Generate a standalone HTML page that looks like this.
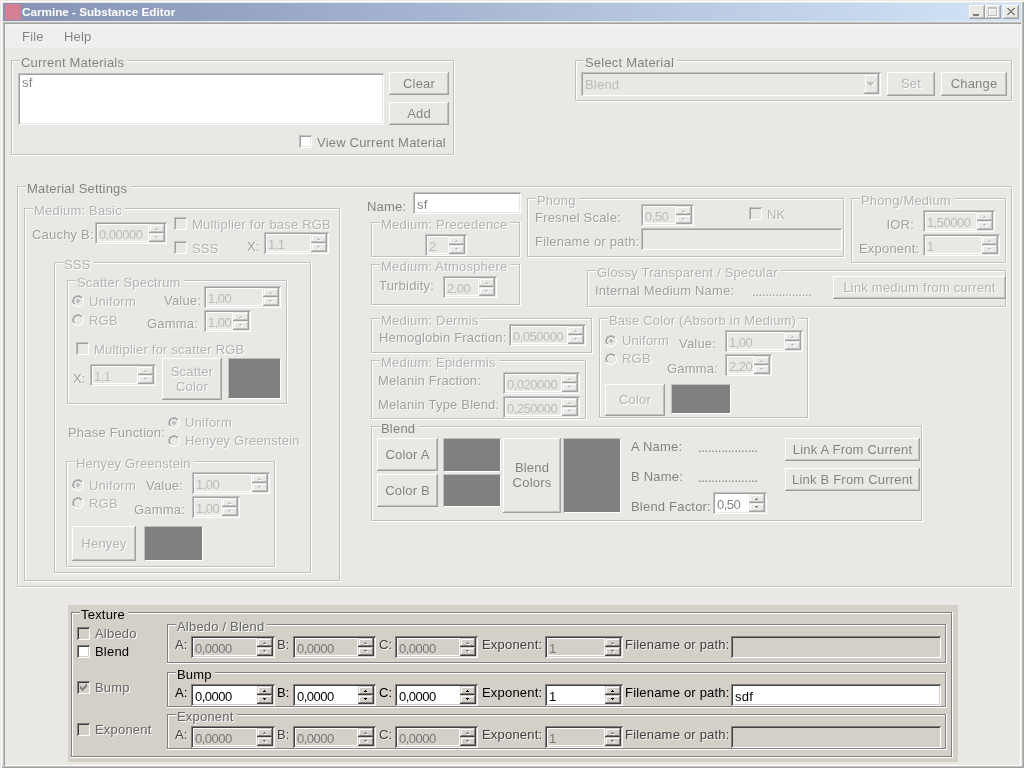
<!DOCTYPE html><html><head><meta charset="utf-8"><style>
html,body{margin:0;padding:0;width:1024px;height:768px;overflow:hidden;background:#d4d0c8}
body>div{will-change:transform}
.a{position:absolute;box-sizing:border-box}
.t{font-family:"Liberation Sans",sans-serif;font-size:13px;line-height:15px;white-space:pre;letter-spacing:0.2px}
.txt{color:#000}
.dis{color:#666;text-shadow:1px 1px 0 #fff}
.edis{color:#777}
.ldis{color:#404040;text-shadow:1px 1px 0 rgba(255,255,255,0.7)}
.ov{position:absolute;left:0;top:0;width:1024px;height:768px;background:rgba(255,255,255,0.5)}
</style></head><body>

<div class="a" style="left:0;top:0;width:1024px;height:768px;background:#d4d0c8">
<div class="a " style="left:0px;top:0px;width:1024px;height:768px;box-shadow:inset 1px 1px #d4d0c8,inset 2px 2px #ffffff,inset -1px -1px #404040,inset -2px -2px #808080"></div>
<div class="a " style="left:3px;top:3px;width:1018px;height:18px;background:linear-gradient(to right,#0a246a,#a6caf0)"></div>
<div class="a " style="left:5px;top:4px;width:16px;height:16px;background:#a80029"></div>
<div class="a" style="left:22px;top:4px;font-family:'Liberation Sans',sans-serif;font-weight:bold;font-size:11.7px;line-height:15px;color:#fff;white-space:pre">Carmine - Substance Editor</div>
<div class="a " style="left:969px;top:5px;width:16px;height:14px;background:#d4d0c8;box-shadow:inset -1px -1px #404040,inset 1px 1px #ffffff,inset -2px -2px #808080;"></div>
<div class="a " style="left:985px;top:5px;width:16px;height:14px;background:#d4d0c8;box-shadow:inset -1px -1px #404040,inset 1px 1px #ffffff,inset -2px -2px #808080;"></div>
<div class="a " style="left:1003px;top:5px;width:16px;height:14px;background:#d4d0c8;box-shadow:inset -1px -1px #404040,inset 1px 1px #ffffff,inset -2px -2px #808080;"></div>
<div class="a " style="left:973px;top:14px;width:6px;height:2px;background:#000"></div>
<svg class="a" style="left:989px;top:8px" width="9" height="9" shape-rendering="crispEdges"><rect x="0" y="0" width="9" height="1" fill="#ffffff"/><rect x="0" y="1" width="9" height="1" fill="#ffffff"/><rect x="0" y="2" width="1" height="1" fill="#ffffff"/><rect x="8" y="2" width="1" height="1" fill="#ffffff"/><rect x="0" y="3" width="1" height="1" fill="#ffffff"/><rect x="8" y="3" width="1" height="1" fill="#ffffff"/><rect x="0" y="4" width="1" height="1" fill="#ffffff"/><rect x="8" y="4" width="1" height="1" fill="#ffffff"/><rect x="0" y="5" width="1" height="1" fill="#ffffff"/><rect x="8" y="5" width="1" height="1" fill="#ffffff"/><rect x="0" y="6" width="1" height="1" fill="#ffffff"/><rect x="8" y="6" width="1" height="1" fill="#ffffff"/><rect x="0" y="7" width="1" height="1" fill="#ffffff"/><rect x="8" y="7" width="1" height="1" fill="#ffffff"/><rect x="0" y="8" width="9" height="1" fill="#ffffff"/></svg>
<svg class="a" style="left:988px;top:7px" width="9" height="9" shape-rendering="crispEdges"><rect x="0" y="0" width="9" height="1" fill="#808080"/><rect x="0" y="1" width="9" height="1" fill="#808080"/><rect x="0" y="2" width="1" height="1" fill="#808080"/><rect x="8" y="2" width="1" height="1" fill="#808080"/><rect x="0" y="3" width="1" height="1" fill="#808080"/><rect x="8" y="3" width="1" height="1" fill="#808080"/><rect x="0" y="4" width="1" height="1" fill="#808080"/><rect x="8" y="4" width="1" height="1" fill="#808080"/><rect x="0" y="5" width="1" height="1" fill="#808080"/><rect x="8" y="5" width="1" height="1" fill="#808080"/><rect x="0" y="6" width="1" height="1" fill="#808080"/><rect x="8" y="6" width="1" height="1" fill="#808080"/><rect x="0" y="7" width="1" height="1" fill="#808080"/><rect x="8" y="7" width="1" height="1" fill="#808080"/><rect x="0" y="8" width="9" height="1" fill="#808080"/></svg>
<svg class="a" style="left:1007px;top:8px" width="8" height="7" shape-rendering="crispEdges"><rect x="0" y="0" width="2" height="1" fill="#000"/><rect x="6" y="0" width="2" height="1" fill="#000"/><rect x="1" y="1" width="2" height="1" fill="#000"/><rect x="5" y="1" width="2" height="1" fill="#000"/><rect x="2" y="2" width="4" height="1" fill="#000"/><rect x="3" y="3" width="2" height="1" fill="#000"/><rect x="2" y="4" width="4" height="1" fill="#000"/><rect x="1" y="5" width="2" height="1" fill="#000"/><rect x="5" y="5" width="2" height="1" fill="#000"/><rect x="0" y="6" width="2" height="1" fill="#000"/><rect x="6" y="6" width="2" height="1" fill="#000"/></svg>
<div class="a " style="left:3px;top:22px;width:1018px;height:744px;box-shadow:inset 1px 1px #808080,inset 2px 2px #404040,inset -1px -1px #ffffff"></div>
<div class="a " style="left:5px;top:24px;width:1014px;height:24px;background:#dfdfdf;box-shadow:inset 1px 1px #e8e8e8"></div>
<div class="a t txt " style="left:22px;top:29px;">File</div>
<div class="a t txt " style="left:64px;top:29px;">Help</div>
<div class="a " style="left:11px;top:60px;width:443px;height:95px;border:1px solid #808080;box-shadow:inset 1px 1px #ffffff,0 1px #ffffff,1px 0 #ffffff,1px 1px #ffffff;"></div>
<div class="a t txt" style="left:20px;top:55px;padding:0 3px 0 1px;background:#d4d0c8">Current Materials</div>
<div class="a " style="left:18px;top:73px;width:366px;height:52px;background:#ffffff;box-shadow:inset 1px 1px #808080,inset -1px -1px #ffffff,inset 2px 2px #404040,inset -2px -2px #d4d0c8;"></div>
<div class="a t txt " style="left:22px;top:75px;">sf</div>
<div class="a " style="left:389px;top:72px;width:60px;height:23px;background:#d4d0c8;box-shadow:inset -1px -1px #404040,inset 1px 1px #ffffff,inset -2px -2px #808080;"></div>
<div class="a t txt" style="left:389px;width:60px;text-align:center;top:76px;">Clear</div>
<div class="a " style="left:389px;top:102px;width:60px;height:23px;background:#d4d0c8;box-shadow:inset -1px -1px #404040,inset 1px 1px #ffffff,inset -2px -2px #808080;"></div>
<div class="a t txt" style="left:389px;width:60px;text-align:center;top:106px;">Add</div>
<div class="a " style="left:299px;top:135px;width:13px;height:13px;background:#ffffff;box-shadow:inset 1px 1px #808080,inset -1px -1px #ffffff,inset 2px 2px #404040,inset -2px -2px #d4d0c8;"></div>
<div class="a t txt " style="left:317px;top:135px;">View Current Material</div>
<div class="a " style="left:575px;top:60px;width:437px;height:41px;border:1px solid #808080;box-shadow:inset 1px 1px #ffffff,0 1px #ffffff,1px 0 #ffffff,1px 1px #ffffff;"></div>
<div class="a t txt" style="left:584px;top:55px;padding:0 3px 0 1px;background:#d4d0c8">Select Material</div>
<div class="a " style="left:581px;top:72px;width:300px;height:24px;background:#d4d0c8;box-shadow:inset 1px 1px #808080,inset -1px -1px #ffffff,inset 2px 2px #404040,inset -2px -2px #d4d0c8;"></div>
<div class="a t edis" style="left:585px;top:77px">Blend</div>
<div class="a " style="left:864px;top:74px;width:15px;height:20px;background:#d4d0c8;box-shadow:inset -1px -1px #404040,inset 1px 1px #d4d0c8,inset -2px -2px #808080,inset 2px 2px #ffffff"></div>
<svg class="a" style="left:867px;top:82px" width="7" height="4" shape-rendering="crispEdges"><rect x="0" y="0" width="7" height="1" fill="#808080"/><rect x="1" y="1" width="5" height="1" fill="#808080"/><rect x="2" y="2" width="3" height="1" fill="#808080"/><rect x="3" y="3" width="1" height="1" fill="#808080"/></svg>
<svg class="a" style="left:868px;top:83px" width="7" height="4" shape-rendering="crispEdges"><rect x="6" y="0" width="1" height="1" fill="#ffffff"/><rect x="5" y="1" width="1" height="1" fill="#ffffff"/><rect x="4" y="2" width="1" height="1" fill="#ffffff"/></svg>
<div class="a " style="left:887px;top:72px;width:48px;height:24px;background:#d4d0c8;box-shadow:inset -1px -1px #404040,inset 1px 1px #ffffff,inset -2px -2px #808080;"></div>
<div class="a t dis" style="left:887px;width:48px;text-align:center;top:76px;">Set</div>
<div class="a " style="left:941px;top:72px;width:66px;height:24px;background:#d4d0c8;box-shadow:inset -1px -1px #404040,inset 1px 1px #ffffff,inset -2px -2px #808080;"></div>
<div class="a t txt" style="left:941px;width:66px;text-align:center;top:76px;">Change</div>
<div class="a " style="left:17px;top:186px;width:995px;height:401px;border:1px solid #808080;box-shadow:inset 1px 1px #ffffff,0 1px #ffffff,1px 0 #ffffff,1px 1px #ffffff;"></div>
<div class="a t txt" style="left:26px;top:181px;padding:0 3px 0 1px;background:#d4d0c8">Material Settings</div>
<div class="a " style="left:24px;top:208px;width:316px;height:373px;border:1px solid #808080;box-shadow:inset 1px 1px #ffffff,0 1px #ffffff,1px 0 #ffffff,1px 1px #ffffff;"></div>
<div class="a t dis" style="left:33px;top:203px;padding:0 3px 0 1px;background:#d4d0c8">Medium: Basic</div>
<div class="a t ldis " style="left:32px;top:227px;">Cauchy B:</div>
<div class="a " style="left:95px;top:222px;width:72px;height:22px;background:#d4d0c8;box-shadow:inset 1px 1px #808080,inset -1px -1px #ffffff,inset 2px 2px #404040,inset -2px -2px #d4d0c8;"></div>
<div class="a " style="left:149px;top:224px;width:16px;height:9px;background:#d4d0c8;box-shadow:inset -1px -1px #404040,inset 1px 1px #d4d0c8,inset -2px -2px #808080,inset 2px 2px #ffffff"></div>
<div class="a " style="left:149px;top:233px;width:16px;height:9px;background:#d4d0c8;box-shadow:inset -1px -1px #404040,inset 1px 1px #d4d0c8,inset -2px -2px #808080,inset 2px 2px #ffffff"></div>
<svg class="a" style="left:156px;top:229px" width="3" height="2" shape-rendering="crispEdges"><rect x="1" y="0" width="1" height="1" fill="#ffffff"/><rect x="0" y="1" width="3" height="1" fill="#ffffff"/></svg>
<svg class="a" style="left:155px;top:228px" width="3" height="2" shape-rendering="crispEdges"><rect x="1" y="0" width="1" height="1" fill="#808080"/><rect x="0" y="1" width="3" height="1" fill="#808080"/></svg>
<svg class="a" style="left:156px;top:237px" width="3" height="2" shape-rendering="crispEdges"><rect x="0" y="0" width="3" height="1" fill="#ffffff"/><rect x="1" y="1" width="1" height="1" fill="#ffffff"/></svg>
<svg class="a" style="left:155px;top:236px" width="3" height="2" shape-rendering="crispEdges"><rect x="0" y="0" width="3" height="1" fill="#808080"/><rect x="1" y="1" width="1" height="1" fill="#808080"/></svg>
<div class="a " style="left:97px;top:224px;width:52px;height:18px;border:1px solid #ffffff"></div>
<div class="a t edis" style="left:99px;top:227px;letter-spacing:-0.5px">0,00000</div>
<div class="a " style="left:174px;top:217px;width:13px;height:13px;background:#d4d0c8;box-shadow:inset 1px 1px #808080,inset -1px -1px #ffffff,inset 2px 2px #404040,inset -2px -2px #d4d0c8;"></div>
<div class="a t dis " style="left:192px;top:217px;">Multiplier for base RGB</div>
<div class="a " style="left:174px;top:241px;width:13px;height:13px;background:#d4d0c8;box-shadow:inset 1px 1px #808080,inset -1px -1px #ffffff,inset 2px 2px #404040,inset -2px -2px #d4d0c8;"></div>
<div class="a t dis " style="left:192px;top:241px;">SSS</div>
<div class="a t ldis " style="left:247px;top:239px;">X:</div>
<div class="a " style="left:264px;top:232px;width:65px;height:22px;background:#d4d0c8;box-shadow:inset 1px 1px #808080,inset -1px -1px #ffffff,inset 2px 2px #404040,inset -2px -2px #d4d0c8;"></div>
<div class="a " style="left:311px;top:234px;width:16px;height:9px;background:#d4d0c8;box-shadow:inset -1px -1px #404040,inset 1px 1px #d4d0c8,inset -2px -2px #808080,inset 2px 2px #ffffff"></div>
<div class="a " style="left:311px;top:243px;width:16px;height:9px;background:#d4d0c8;box-shadow:inset -1px -1px #404040,inset 1px 1px #d4d0c8,inset -2px -2px #808080,inset 2px 2px #ffffff"></div>
<svg class="a" style="left:318px;top:239px" width="3" height="2" shape-rendering="crispEdges"><rect x="1" y="0" width="1" height="1" fill="#ffffff"/><rect x="0" y="1" width="3" height="1" fill="#ffffff"/></svg>
<svg class="a" style="left:317px;top:238px" width="3" height="2" shape-rendering="crispEdges"><rect x="1" y="0" width="1" height="1" fill="#808080"/><rect x="0" y="1" width="3" height="1" fill="#808080"/></svg>
<svg class="a" style="left:318px;top:247px" width="3" height="2" shape-rendering="crispEdges"><rect x="0" y="0" width="3" height="1" fill="#ffffff"/><rect x="1" y="1" width="1" height="1" fill="#ffffff"/></svg>
<svg class="a" style="left:317px;top:246px" width="3" height="2" shape-rendering="crispEdges"><rect x="0" y="0" width="3" height="1" fill="#808080"/><rect x="1" y="1" width="1" height="1" fill="#808080"/></svg>
<div class="a " style="left:266px;top:234px;width:45px;height:18px;border:1px solid #ffffff"></div>
<div class="a t edis" style="left:268px;top:237px;letter-spacing:-0.5px">1,1</div>
<div class="a " style="left:54px;top:262px;width:257px;height:311px;border:1px solid #808080;box-shadow:inset 1px 1px #ffffff,0 1px #ffffff,1px 0 #ffffff,1px 1px #ffffff;"></div>
<div class="a t dis" style="left:63px;top:257px;padding:0 3px 0 1px;background:#d4d0c8">SSS</div>
<div class="a " style="left:67px;top:280px;width:220px;height:124px;border:1px solid #808080;box-shadow:inset 1px 1px #ffffff,0 1px #ffffff,1px 0 #ffffff,1px 1px #ffffff;"></div>
<div class="a t dis" style="left:76px;top:275px;padding:0 3px 0 1px;background:#d4d0c8">Scatter Spectrum</div>
<svg class="a" style="left:72px;top:295px" width="12" height="12" shape-rendering="crispEdges"><rect x="4" y="0" width="4" height="1" fill="#808080"/><rect x="2" y="1" width="2" height="1" fill="#808080"/><rect x="4" y="1" width="4" height="1" fill="#404040"/><rect x="8" y="1" width="2" height="1" fill="#808080"/><rect x="1" y="2" width="1" height="1" fill="#808080"/><rect x="2" y="2" width="2" height="1" fill="#404040"/><rect x="4" y="2" width="4" height="1" fill="#d4d0c8"/><rect x="8" y="2" width="2" height="1" fill="#404040"/><rect x="10" y="2" width="1" height="1" fill="#ffffff"/><rect x="1" y="3" width="1" height="1" fill="#808080"/><rect x="2" y="3" width="1" height="1" fill="#404040"/><rect x="3" y="3" width="6" height="1" fill="#d4d0c8"/><rect x="9" y="3" width="1" height="1" fill="#d4d0c8"/><rect x="10" y="3" width="1" height="1" fill="#ffffff"/><rect x="0" y="4" width="1" height="1" fill="#808080"/><rect x="1" y="4" width="1" height="1" fill="#404040"/><rect x="2" y="4" width="8" height="1" fill="#d4d0c8"/><rect x="10" y="4" width="1" height="1" fill="#d4d0c8"/><rect x="11" y="4" width="1" height="1" fill="#ffffff"/><rect x="0" y="5" width="1" height="1" fill="#808080"/><rect x="1" y="5" width="1" height="1" fill="#404040"/><rect x="2" y="5" width="8" height="1" fill="#d4d0c8"/><rect x="10" y="5" width="1" height="1" fill="#d4d0c8"/><rect x="11" y="5" width="1" height="1" fill="#ffffff"/><rect x="0" y="6" width="1" height="1" fill="#808080"/><rect x="1" y="6" width="1" height="1" fill="#404040"/><rect x="2" y="6" width="8" height="1" fill="#d4d0c8"/><rect x="10" y="6" width="1" height="1" fill="#d4d0c8"/><rect x="11" y="6" width="1" height="1" fill="#ffffff"/><rect x="0" y="7" width="1" height="1" fill="#808080"/><rect x="1" y="7" width="1" height="1" fill="#404040"/><rect x="2" y="7" width="8" height="1" fill="#d4d0c8"/><rect x="10" y="7" width="1" height="1" fill="#d4d0c8"/><rect x="11" y="7" width="1" height="1" fill="#ffffff"/><rect x="1" y="8" width="1" height="1" fill="#808080"/><rect x="2" y="8" width="1" height="1" fill="#404040"/><rect x="3" y="8" width="6" height="1" fill="#d4d0c8"/><rect x="9" y="8" width="1" height="1" fill="#d4d0c8"/><rect x="10" y="8" width="1" height="1" fill="#ffffff"/><rect x="1" y="9" width="1" height="1" fill="#ffffff"/><rect x="2" y="9" width="2" height="1" fill="#d4d0c8"/><rect x="4" y="9" width="4" height="1" fill="#d4d0c8"/><rect x="8" y="9" width="2" height="1" fill="#d4d0c8"/><rect x="10" y="9" width="1" height="1" fill="#ffffff"/><rect x="2" y="10" width="2" height="1" fill="#ffffff"/><rect x="4" y="10" width="4" height="1" fill="#d4d0c8"/><rect x="8" y="10" width="2" height="1" fill="#ffffff"/><rect x="4" y="11" width="4" height="1" fill="#ffffff"/></svg>
<svg class="a" style="left:72px;top:295px" width="12" height="8" shape-rendering="crispEdges"><rect x="5" y="4" width="2" height="1" fill="#808080"/><rect x="4" y="5" width="4" height="1" fill="#808080"/><rect x="4" y="6" width="4" height="1" fill="#808080"/><rect x="5" y="7" width="2" height="1" fill="#808080"/></svg>
<div class="a t dis " style="left:89px;top:294px;">Uniform</div>
<svg class="a" style="left:72px;top:314px" width="12" height="12" shape-rendering="crispEdges"><rect x="4" y="0" width="4" height="1" fill="#808080"/><rect x="2" y="1" width="2" height="1" fill="#808080"/><rect x="4" y="1" width="4" height="1" fill="#404040"/><rect x="8" y="1" width="2" height="1" fill="#808080"/><rect x="1" y="2" width="1" height="1" fill="#808080"/><rect x="2" y="2" width="2" height="1" fill="#404040"/><rect x="4" y="2" width="4" height="1" fill="#d4d0c8"/><rect x="8" y="2" width="2" height="1" fill="#404040"/><rect x="10" y="2" width="1" height="1" fill="#ffffff"/><rect x="1" y="3" width="1" height="1" fill="#808080"/><rect x="2" y="3" width="1" height="1" fill="#404040"/><rect x="3" y="3" width="6" height="1" fill="#d4d0c8"/><rect x="9" y="3" width="1" height="1" fill="#d4d0c8"/><rect x="10" y="3" width="1" height="1" fill="#ffffff"/><rect x="0" y="4" width="1" height="1" fill="#808080"/><rect x="1" y="4" width="1" height="1" fill="#404040"/><rect x="2" y="4" width="8" height="1" fill="#d4d0c8"/><rect x="10" y="4" width="1" height="1" fill="#d4d0c8"/><rect x="11" y="4" width="1" height="1" fill="#ffffff"/><rect x="0" y="5" width="1" height="1" fill="#808080"/><rect x="1" y="5" width="1" height="1" fill="#404040"/><rect x="2" y="5" width="8" height="1" fill="#d4d0c8"/><rect x="10" y="5" width="1" height="1" fill="#d4d0c8"/><rect x="11" y="5" width="1" height="1" fill="#ffffff"/><rect x="0" y="6" width="1" height="1" fill="#808080"/><rect x="1" y="6" width="1" height="1" fill="#404040"/><rect x="2" y="6" width="8" height="1" fill="#d4d0c8"/><rect x="10" y="6" width="1" height="1" fill="#d4d0c8"/><rect x="11" y="6" width="1" height="1" fill="#ffffff"/><rect x="0" y="7" width="1" height="1" fill="#808080"/><rect x="1" y="7" width="1" height="1" fill="#404040"/><rect x="2" y="7" width="8" height="1" fill="#d4d0c8"/><rect x="10" y="7" width="1" height="1" fill="#d4d0c8"/><rect x="11" y="7" width="1" height="1" fill="#ffffff"/><rect x="1" y="8" width="1" height="1" fill="#808080"/><rect x="2" y="8" width="1" height="1" fill="#404040"/><rect x="3" y="8" width="6" height="1" fill="#d4d0c8"/><rect x="9" y="8" width="1" height="1" fill="#d4d0c8"/><rect x="10" y="8" width="1" height="1" fill="#ffffff"/><rect x="1" y="9" width="1" height="1" fill="#ffffff"/><rect x="2" y="9" width="2" height="1" fill="#d4d0c8"/><rect x="4" y="9" width="4" height="1" fill="#d4d0c8"/><rect x="8" y="9" width="2" height="1" fill="#d4d0c8"/><rect x="10" y="9" width="1" height="1" fill="#ffffff"/><rect x="2" y="10" width="2" height="1" fill="#ffffff"/><rect x="4" y="10" width="4" height="1" fill="#d4d0c8"/><rect x="8" y="10" width="2" height="1" fill="#ffffff"/><rect x="4" y="11" width="4" height="1" fill="#ffffff"/></svg>
<div class="a t dis " style="left:89px;top:313px;">RGB</div>
<div class="a t ldis " style="left:164px;top:293px;">Value:</div>
<div class="a " style="left:204px;top:286px;width:77px;height:22px;background:#d4d0c8;box-shadow:inset 1px 1px #808080,inset -1px -1px #ffffff,inset 2px 2px #404040,inset -2px -2px #d4d0c8;"></div>
<div class="a " style="left:263px;top:288px;width:16px;height:9px;background:#d4d0c8;box-shadow:inset -1px -1px #404040,inset 1px 1px #d4d0c8,inset -2px -2px #808080,inset 2px 2px #ffffff"></div>
<div class="a " style="left:263px;top:297px;width:16px;height:9px;background:#d4d0c8;box-shadow:inset -1px -1px #404040,inset 1px 1px #d4d0c8,inset -2px -2px #808080,inset 2px 2px #ffffff"></div>
<svg class="a" style="left:270px;top:293px" width="3" height="2" shape-rendering="crispEdges"><rect x="1" y="0" width="1" height="1" fill="#ffffff"/><rect x="0" y="1" width="3" height="1" fill="#ffffff"/></svg>
<svg class="a" style="left:269px;top:292px" width="3" height="2" shape-rendering="crispEdges"><rect x="1" y="0" width="1" height="1" fill="#808080"/><rect x="0" y="1" width="3" height="1" fill="#808080"/></svg>
<svg class="a" style="left:270px;top:301px" width="3" height="2" shape-rendering="crispEdges"><rect x="0" y="0" width="3" height="1" fill="#ffffff"/><rect x="1" y="1" width="1" height="1" fill="#ffffff"/></svg>
<svg class="a" style="left:269px;top:300px" width="3" height="2" shape-rendering="crispEdges"><rect x="0" y="0" width="3" height="1" fill="#808080"/><rect x="1" y="1" width="1" height="1" fill="#808080"/></svg>
<div class="a " style="left:206px;top:288px;width:57px;height:18px;border:1px solid #ffffff"></div>
<div class="a t edis" style="left:208px;top:291px;letter-spacing:-0.5px">1,00</div>
<div class="a t ldis " style="left:147px;top:316px;">Gamma:</div>
<div class="a " style="left:204px;top:310px;width:47px;height:22px;background:#d4d0c8;box-shadow:inset 1px 1px #808080,inset -1px -1px #ffffff,inset 2px 2px #404040,inset -2px -2px #d4d0c8;"></div>
<div class="a " style="left:233px;top:312px;width:16px;height:9px;background:#d4d0c8;box-shadow:inset -1px -1px #404040,inset 1px 1px #d4d0c8,inset -2px -2px #808080,inset 2px 2px #ffffff"></div>
<div class="a " style="left:233px;top:321px;width:16px;height:9px;background:#d4d0c8;box-shadow:inset -1px -1px #404040,inset 1px 1px #d4d0c8,inset -2px -2px #808080,inset 2px 2px #ffffff"></div>
<svg class="a" style="left:240px;top:317px" width="3" height="2" shape-rendering="crispEdges"><rect x="1" y="0" width="1" height="1" fill="#ffffff"/><rect x="0" y="1" width="3" height="1" fill="#ffffff"/></svg>
<svg class="a" style="left:239px;top:316px" width="3" height="2" shape-rendering="crispEdges"><rect x="1" y="0" width="1" height="1" fill="#808080"/><rect x="0" y="1" width="3" height="1" fill="#808080"/></svg>
<svg class="a" style="left:240px;top:325px" width="3" height="2" shape-rendering="crispEdges"><rect x="0" y="0" width="3" height="1" fill="#ffffff"/><rect x="1" y="1" width="1" height="1" fill="#ffffff"/></svg>
<svg class="a" style="left:239px;top:324px" width="3" height="2" shape-rendering="crispEdges"><rect x="0" y="0" width="3" height="1" fill="#808080"/><rect x="1" y="1" width="1" height="1" fill="#808080"/></svg>
<div class="a " style="left:206px;top:312px;width:27px;height:18px;border:1px solid #ffffff"></div>
<div class="a t edis" style="left:208px;top:315px;letter-spacing:-0.5px">1,00</div>
<div class="a " style="left:76px;top:342px;width:13px;height:13px;background:#d4d0c8;box-shadow:inset 1px 1px #808080,inset -1px -1px #ffffff,inset 2px 2px #404040,inset -2px -2px #d4d0c8;"></div>
<div class="a t dis " style="left:94px;top:342px;">Multiplier for scatter RGB</div>
<div class="a t ldis " style="left:73px;top:371px;">X:</div>
<div class="a " style="left:90px;top:364px;width:66px;height:22px;background:#d4d0c8;box-shadow:inset 1px 1px #808080,inset -1px -1px #ffffff,inset 2px 2px #404040,inset -2px -2px #d4d0c8;"></div>
<div class="a " style="left:138px;top:366px;width:16px;height:9px;background:#d4d0c8;box-shadow:inset -1px -1px #404040,inset 1px 1px #d4d0c8,inset -2px -2px #808080,inset 2px 2px #ffffff"></div>
<div class="a " style="left:138px;top:375px;width:16px;height:9px;background:#d4d0c8;box-shadow:inset -1px -1px #404040,inset 1px 1px #d4d0c8,inset -2px -2px #808080,inset 2px 2px #ffffff"></div>
<svg class="a" style="left:145px;top:371px" width="3" height="2" shape-rendering="crispEdges"><rect x="1" y="0" width="1" height="1" fill="#ffffff"/><rect x="0" y="1" width="3" height="1" fill="#ffffff"/></svg>
<svg class="a" style="left:144px;top:370px" width="3" height="2" shape-rendering="crispEdges"><rect x="1" y="0" width="1" height="1" fill="#808080"/><rect x="0" y="1" width="3" height="1" fill="#808080"/></svg>
<svg class="a" style="left:145px;top:379px" width="3" height="2" shape-rendering="crispEdges"><rect x="0" y="0" width="3" height="1" fill="#ffffff"/><rect x="1" y="1" width="1" height="1" fill="#ffffff"/></svg>
<svg class="a" style="left:144px;top:378px" width="3" height="2" shape-rendering="crispEdges"><rect x="0" y="0" width="3" height="1" fill="#808080"/><rect x="1" y="1" width="1" height="1" fill="#808080"/></svg>
<div class="a " style="left:92px;top:366px;width:46px;height:18px;border:1px solid #ffffff"></div>
<div class="a t edis" style="left:94px;top:369px;letter-spacing:-0.5px">1,1</div>
<div class="a " style="left:162px;top:358px;width:60px;height:42px;background:#d4d0c8;box-shadow:inset -1px -1px #404040,inset 1px 1px #ffffff,inset -2px -2px #808080;"></div>
<div class="a t dis" style="left:162px;width:60px;text-align:center;top:364px;">Scatter</div>
<div class="a t dis" style="left:162px;width:60px;text-align:center;top:379px;">Color</div>
<div class="a " style="left:228px;top:358px;width:53px;height:41px;background:#000;box-shadow:inset 1px 1px #808080,inset -1px -1px #ffffff"></div>
<div class="a t ldis " style="left:68px;top:425px;">Phase Function:</div>
<svg class="a" style="left:168px;top:417px" width="12" height="12" shape-rendering="crispEdges"><rect x="4" y="0" width="4" height="1" fill="#808080"/><rect x="2" y="1" width="2" height="1" fill="#808080"/><rect x="4" y="1" width="4" height="1" fill="#404040"/><rect x="8" y="1" width="2" height="1" fill="#808080"/><rect x="1" y="2" width="1" height="1" fill="#808080"/><rect x="2" y="2" width="2" height="1" fill="#404040"/><rect x="4" y="2" width="4" height="1" fill="#d4d0c8"/><rect x="8" y="2" width="2" height="1" fill="#404040"/><rect x="10" y="2" width="1" height="1" fill="#ffffff"/><rect x="1" y="3" width="1" height="1" fill="#808080"/><rect x="2" y="3" width="1" height="1" fill="#404040"/><rect x="3" y="3" width="6" height="1" fill="#d4d0c8"/><rect x="9" y="3" width="1" height="1" fill="#d4d0c8"/><rect x="10" y="3" width="1" height="1" fill="#ffffff"/><rect x="0" y="4" width="1" height="1" fill="#808080"/><rect x="1" y="4" width="1" height="1" fill="#404040"/><rect x="2" y="4" width="8" height="1" fill="#d4d0c8"/><rect x="10" y="4" width="1" height="1" fill="#d4d0c8"/><rect x="11" y="4" width="1" height="1" fill="#ffffff"/><rect x="0" y="5" width="1" height="1" fill="#808080"/><rect x="1" y="5" width="1" height="1" fill="#404040"/><rect x="2" y="5" width="8" height="1" fill="#d4d0c8"/><rect x="10" y="5" width="1" height="1" fill="#d4d0c8"/><rect x="11" y="5" width="1" height="1" fill="#ffffff"/><rect x="0" y="6" width="1" height="1" fill="#808080"/><rect x="1" y="6" width="1" height="1" fill="#404040"/><rect x="2" y="6" width="8" height="1" fill="#d4d0c8"/><rect x="10" y="6" width="1" height="1" fill="#d4d0c8"/><rect x="11" y="6" width="1" height="1" fill="#ffffff"/><rect x="0" y="7" width="1" height="1" fill="#808080"/><rect x="1" y="7" width="1" height="1" fill="#404040"/><rect x="2" y="7" width="8" height="1" fill="#d4d0c8"/><rect x="10" y="7" width="1" height="1" fill="#d4d0c8"/><rect x="11" y="7" width="1" height="1" fill="#ffffff"/><rect x="1" y="8" width="1" height="1" fill="#808080"/><rect x="2" y="8" width="1" height="1" fill="#404040"/><rect x="3" y="8" width="6" height="1" fill="#d4d0c8"/><rect x="9" y="8" width="1" height="1" fill="#d4d0c8"/><rect x="10" y="8" width="1" height="1" fill="#ffffff"/><rect x="1" y="9" width="1" height="1" fill="#ffffff"/><rect x="2" y="9" width="2" height="1" fill="#d4d0c8"/><rect x="4" y="9" width="4" height="1" fill="#d4d0c8"/><rect x="8" y="9" width="2" height="1" fill="#d4d0c8"/><rect x="10" y="9" width="1" height="1" fill="#ffffff"/><rect x="2" y="10" width="2" height="1" fill="#ffffff"/><rect x="4" y="10" width="4" height="1" fill="#d4d0c8"/><rect x="8" y="10" width="2" height="1" fill="#ffffff"/><rect x="4" y="11" width="4" height="1" fill="#ffffff"/></svg>
<svg class="a" style="left:168px;top:417px" width="12" height="8" shape-rendering="crispEdges"><rect x="5" y="4" width="2" height="1" fill="#808080"/><rect x="4" y="5" width="4" height="1" fill="#808080"/><rect x="4" y="6" width="4" height="1" fill="#808080"/><rect x="5" y="7" width="2" height="1" fill="#808080"/></svg>
<div class="a t dis " style="left:185px;top:415px;">Uniform</div>
<svg class="a" style="left:168px;top:435px" width="12" height="12" shape-rendering="crispEdges"><rect x="4" y="0" width="4" height="1" fill="#808080"/><rect x="2" y="1" width="2" height="1" fill="#808080"/><rect x="4" y="1" width="4" height="1" fill="#404040"/><rect x="8" y="1" width="2" height="1" fill="#808080"/><rect x="1" y="2" width="1" height="1" fill="#808080"/><rect x="2" y="2" width="2" height="1" fill="#404040"/><rect x="4" y="2" width="4" height="1" fill="#d4d0c8"/><rect x="8" y="2" width="2" height="1" fill="#404040"/><rect x="10" y="2" width="1" height="1" fill="#ffffff"/><rect x="1" y="3" width="1" height="1" fill="#808080"/><rect x="2" y="3" width="1" height="1" fill="#404040"/><rect x="3" y="3" width="6" height="1" fill="#d4d0c8"/><rect x="9" y="3" width="1" height="1" fill="#d4d0c8"/><rect x="10" y="3" width="1" height="1" fill="#ffffff"/><rect x="0" y="4" width="1" height="1" fill="#808080"/><rect x="1" y="4" width="1" height="1" fill="#404040"/><rect x="2" y="4" width="8" height="1" fill="#d4d0c8"/><rect x="10" y="4" width="1" height="1" fill="#d4d0c8"/><rect x="11" y="4" width="1" height="1" fill="#ffffff"/><rect x="0" y="5" width="1" height="1" fill="#808080"/><rect x="1" y="5" width="1" height="1" fill="#404040"/><rect x="2" y="5" width="8" height="1" fill="#d4d0c8"/><rect x="10" y="5" width="1" height="1" fill="#d4d0c8"/><rect x="11" y="5" width="1" height="1" fill="#ffffff"/><rect x="0" y="6" width="1" height="1" fill="#808080"/><rect x="1" y="6" width="1" height="1" fill="#404040"/><rect x="2" y="6" width="8" height="1" fill="#d4d0c8"/><rect x="10" y="6" width="1" height="1" fill="#d4d0c8"/><rect x="11" y="6" width="1" height="1" fill="#ffffff"/><rect x="0" y="7" width="1" height="1" fill="#808080"/><rect x="1" y="7" width="1" height="1" fill="#404040"/><rect x="2" y="7" width="8" height="1" fill="#d4d0c8"/><rect x="10" y="7" width="1" height="1" fill="#d4d0c8"/><rect x="11" y="7" width="1" height="1" fill="#ffffff"/><rect x="1" y="8" width="1" height="1" fill="#808080"/><rect x="2" y="8" width="1" height="1" fill="#404040"/><rect x="3" y="8" width="6" height="1" fill="#d4d0c8"/><rect x="9" y="8" width="1" height="1" fill="#d4d0c8"/><rect x="10" y="8" width="1" height="1" fill="#ffffff"/><rect x="1" y="9" width="1" height="1" fill="#ffffff"/><rect x="2" y="9" width="2" height="1" fill="#d4d0c8"/><rect x="4" y="9" width="4" height="1" fill="#d4d0c8"/><rect x="8" y="9" width="2" height="1" fill="#d4d0c8"/><rect x="10" y="9" width="1" height="1" fill="#ffffff"/><rect x="2" y="10" width="2" height="1" fill="#ffffff"/><rect x="4" y="10" width="4" height="1" fill="#d4d0c8"/><rect x="8" y="10" width="2" height="1" fill="#ffffff"/><rect x="4" y="11" width="4" height="1" fill="#ffffff"/></svg>
<div class="a t dis " style="left:185px;top:433px;">Henyey Greenstein</div>
<div class="a " style="left:66px;top:461px;width:209px;height:106px;border:1px solid #808080;box-shadow:inset 1px 1px #ffffff,0 1px #ffffff,1px 0 #ffffff,1px 1px #ffffff;"></div>
<div class="a t dis" style="left:75px;top:456px;padding:0 3px 0 1px;background:#d4d0c8">Henyey Greenstein</div>
<svg class="a" style="left:72px;top:479px" width="12" height="12" shape-rendering="crispEdges"><rect x="4" y="0" width="4" height="1" fill="#808080"/><rect x="2" y="1" width="2" height="1" fill="#808080"/><rect x="4" y="1" width="4" height="1" fill="#404040"/><rect x="8" y="1" width="2" height="1" fill="#808080"/><rect x="1" y="2" width="1" height="1" fill="#808080"/><rect x="2" y="2" width="2" height="1" fill="#404040"/><rect x="4" y="2" width="4" height="1" fill="#d4d0c8"/><rect x="8" y="2" width="2" height="1" fill="#404040"/><rect x="10" y="2" width="1" height="1" fill="#ffffff"/><rect x="1" y="3" width="1" height="1" fill="#808080"/><rect x="2" y="3" width="1" height="1" fill="#404040"/><rect x="3" y="3" width="6" height="1" fill="#d4d0c8"/><rect x="9" y="3" width="1" height="1" fill="#d4d0c8"/><rect x="10" y="3" width="1" height="1" fill="#ffffff"/><rect x="0" y="4" width="1" height="1" fill="#808080"/><rect x="1" y="4" width="1" height="1" fill="#404040"/><rect x="2" y="4" width="8" height="1" fill="#d4d0c8"/><rect x="10" y="4" width="1" height="1" fill="#d4d0c8"/><rect x="11" y="4" width="1" height="1" fill="#ffffff"/><rect x="0" y="5" width="1" height="1" fill="#808080"/><rect x="1" y="5" width="1" height="1" fill="#404040"/><rect x="2" y="5" width="8" height="1" fill="#d4d0c8"/><rect x="10" y="5" width="1" height="1" fill="#d4d0c8"/><rect x="11" y="5" width="1" height="1" fill="#ffffff"/><rect x="0" y="6" width="1" height="1" fill="#808080"/><rect x="1" y="6" width="1" height="1" fill="#404040"/><rect x="2" y="6" width="8" height="1" fill="#d4d0c8"/><rect x="10" y="6" width="1" height="1" fill="#d4d0c8"/><rect x="11" y="6" width="1" height="1" fill="#ffffff"/><rect x="0" y="7" width="1" height="1" fill="#808080"/><rect x="1" y="7" width="1" height="1" fill="#404040"/><rect x="2" y="7" width="8" height="1" fill="#d4d0c8"/><rect x="10" y="7" width="1" height="1" fill="#d4d0c8"/><rect x="11" y="7" width="1" height="1" fill="#ffffff"/><rect x="1" y="8" width="1" height="1" fill="#808080"/><rect x="2" y="8" width="1" height="1" fill="#404040"/><rect x="3" y="8" width="6" height="1" fill="#d4d0c8"/><rect x="9" y="8" width="1" height="1" fill="#d4d0c8"/><rect x="10" y="8" width="1" height="1" fill="#ffffff"/><rect x="1" y="9" width="1" height="1" fill="#ffffff"/><rect x="2" y="9" width="2" height="1" fill="#d4d0c8"/><rect x="4" y="9" width="4" height="1" fill="#d4d0c8"/><rect x="8" y="9" width="2" height="1" fill="#d4d0c8"/><rect x="10" y="9" width="1" height="1" fill="#ffffff"/><rect x="2" y="10" width="2" height="1" fill="#ffffff"/><rect x="4" y="10" width="4" height="1" fill="#d4d0c8"/><rect x="8" y="10" width="2" height="1" fill="#ffffff"/><rect x="4" y="11" width="4" height="1" fill="#ffffff"/></svg>
<svg class="a" style="left:72px;top:479px" width="12" height="8" shape-rendering="crispEdges"><rect x="5" y="4" width="2" height="1" fill="#808080"/><rect x="4" y="5" width="4" height="1" fill="#808080"/><rect x="4" y="6" width="4" height="1" fill="#808080"/><rect x="5" y="7" width="2" height="1" fill="#808080"/></svg>
<div class="a t dis " style="left:89px;top:478px;">Uniform</div>
<svg class="a" style="left:72px;top:497px" width="12" height="12" shape-rendering="crispEdges"><rect x="4" y="0" width="4" height="1" fill="#808080"/><rect x="2" y="1" width="2" height="1" fill="#808080"/><rect x="4" y="1" width="4" height="1" fill="#404040"/><rect x="8" y="1" width="2" height="1" fill="#808080"/><rect x="1" y="2" width="1" height="1" fill="#808080"/><rect x="2" y="2" width="2" height="1" fill="#404040"/><rect x="4" y="2" width="4" height="1" fill="#d4d0c8"/><rect x="8" y="2" width="2" height="1" fill="#404040"/><rect x="10" y="2" width="1" height="1" fill="#ffffff"/><rect x="1" y="3" width="1" height="1" fill="#808080"/><rect x="2" y="3" width="1" height="1" fill="#404040"/><rect x="3" y="3" width="6" height="1" fill="#d4d0c8"/><rect x="9" y="3" width="1" height="1" fill="#d4d0c8"/><rect x="10" y="3" width="1" height="1" fill="#ffffff"/><rect x="0" y="4" width="1" height="1" fill="#808080"/><rect x="1" y="4" width="1" height="1" fill="#404040"/><rect x="2" y="4" width="8" height="1" fill="#d4d0c8"/><rect x="10" y="4" width="1" height="1" fill="#d4d0c8"/><rect x="11" y="4" width="1" height="1" fill="#ffffff"/><rect x="0" y="5" width="1" height="1" fill="#808080"/><rect x="1" y="5" width="1" height="1" fill="#404040"/><rect x="2" y="5" width="8" height="1" fill="#d4d0c8"/><rect x="10" y="5" width="1" height="1" fill="#d4d0c8"/><rect x="11" y="5" width="1" height="1" fill="#ffffff"/><rect x="0" y="6" width="1" height="1" fill="#808080"/><rect x="1" y="6" width="1" height="1" fill="#404040"/><rect x="2" y="6" width="8" height="1" fill="#d4d0c8"/><rect x="10" y="6" width="1" height="1" fill="#d4d0c8"/><rect x="11" y="6" width="1" height="1" fill="#ffffff"/><rect x="0" y="7" width="1" height="1" fill="#808080"/><rect x="1" y="7" width="1" height="1" fill="#404040"/><rect x="2" y="7" width="8" height="1" fill="#d4d0c8"/><rect x="10" y="7" width="1" height="1" fill="#d4d0c8"/><rect x="11" y="7" width="1" height="1" fill="#ffffff"/><rect x="1" y="8" width="1" height="1" fill="#808080"/><rect x="2" y="8" width="1" height="1" fill="#404040"/><rect x="3" y="8" width="6" height="1" fill="#d4d0c8"/><rect x="9" y="8" width="1" height="1" fill="#d4d0c8"/><rect x="10" y="8" width="1" height="1" fill="#ffffff"/><rect x="1" y="9" width="1" height="1" fill="#ffffff"/><rect x="2" y="9" width="2" height="1" fill="#d4d0c8"/><rect x="4" y="9" width="4" height="1" fill="#d4d0c8"/><rect x="8" y="9" width="2" height="1" fill="#d4d0c8"/><rect x="10" y="9" width="1" height="1" fill="#ffffff"/><rect x="2" y="10" width="2" height="1" fill="#ffffff"/><rect x="4" y="10" width="4" height="1" fill="#d4d0c8"/><rect x="8" y="10" width="2" height="1" fill="#ffffff"/><rect x="4" y="11" width="4" height="1" fill="#ffffff"/></svg>
<div class="a t dis " style="left:89px;top:496px;">RGB</div>
<div class="a t ldis " style="left:146px;top:478px;">Value:</div>
<div class="a " style="left:192px;top:472px;width:78px;height:22px;background:#d4d0c8;box-shadow:inset 1px 1px #808080,inset -1px -1px #ffffff,inset 2px 2px #404040,inset -2px -2px #d4d0c8;"></div>
<div class="a " style="left:252px;top:474px;width:16px;height:9px;background:#d4d0c8;box-shadow:inset -1px -1px #404040,inset 1px 1px #d4d0c8,inset -2px -2px #808080,inset 2px 2px #ffffff"></div>
<div class="a " style="left:252px;top:483px;width:16px;height:9px;background:#d4d0c8;box-shadow:inset -1px -1px #404040,inset 1px 1px #d4d0c8,inset -2px -2px #808080,inset 2px 2px #ffffff"></div>
<svg class="a" style="left:259px;top:479px" width="3" height="2" shape-rendering="crispEdges"><rect x="1" y="0" width="1" height="1" fill="#ffffff"/><rect x="0" y="1" width="3" height="1" fill="#ffffff"/></svg>
<svg class="a" style="left:258px;top:478px" width="3" height="2" shape-rendering="crispEdges"><rect x="1" y="0" width="1" height="1" fill="#808080"/><rect x="0" y="1" width="3" height="1" fill="#808080"/></svg>
<svg class="a" style="left:259px;top:487px" width="3" height="2" shape-rendering="crispEdges"><rect x="0" y="0" width="3" height="1" fill="#ffffff"/><rect x="1" y="1" width="1" height="1" fill="#ffffff"/></svg>
<svg class="a" style="left:258px;top:486px" width="3" height="2" shape-rendering="crispEdges"><rect x="0" y="0" width="3" height="1" fill="#808080"/><rect x="1" y="1" width="1" height="1" fill="#808080"/></svg>
<div class="a " style="left:194px;top:474px;width:58px;height:18px;border:1px solid #ffffff"></div>
<div class="a t edis" style="left:196px;top:477px;letter-spacing:-0.5px">1,00</div>
<div class="a t ldis " style="left:134px;top:502px;">Gamma:</div>
<div class="a " style="left:192px;top:496px;width:48px;height:22px;background:#d4d0c8;box-shadow:inset 1px 1px #808080,inset -1px -1px #ffffff,inset 2px 2px #404040,inset -2px -2px #d4d0c8;"></div>
<div class="a " style="left:222px;top:498px;width:16px;height:9px;background:#d4d0c8;box-shadow:inset -1px -1px #404040,inset 1px 1px #d4d0c8,inset -2px -2px #808080,inset 2px 2px #ffffff"></div>
<div class="a " style="left:222px;top:507px;width:16px;height:9px;background:#d4d0c8;box-shadow:inset -1px -1px #404040,inset 1px 1px #d4d0c8,inset -2px -2px #808080,inset 2px 2px #ffffff"></div>
<svg class="a" style="left:229px;top:503px" width="3" height="2" shape-rendering="crispEdges"><rect x="1" y="0" width="1" height="1" fill="#ffffff"/><rect x="0" y="1" width="3" height="1" fill="#ffffff"/></svg>
<svg class="a" style="left:228px;top:502px" width="3" height="2" shape-rendering="crispEdges"><rect x="1" y="0" width="1" height="1" fill="#808080"/><rect x="0" y="1" width="3" height="1" fill="#808080"/></svg>
<svg class="a" style="left:229px;top:511px" width="3" height="2" shape-rendering="crispEdges"><rect x="0" y="0" width="3" height="1" fill="#ffffff"/><rect x="1" y="1" width="1" height="1" fill="#ffffff"/></svg>
<svg class="a" style="left:228px;top:510px" width="3" height="2" shape-rendering="crispEdges"><rect x="0" y="0" width="3" height="1" fill="#808080"/><rect x="1" y="1" width="1" height="1" fill="#808080"/></svg>
<div class="a " style="left:194px;top:498px;width:28px;height:18px;border:1px solid #ffffff"></div>
<div class="a t edis" style="left:196px;top:501px;letter-spacing:-0.5px">1,00</div>
<div class="a " style="left:72px;top:526px;width:64px;height:35px;background:#d4d0c8;box-shadow:inset -1px -1px #404040,inset 1px 1px #ffffff,inset -2px -2px #808080;"></div>
<div class="a t dis" style="left:72px;width:64px;text-align:center;top:536px;">Henyey</div>
<div class="a " style="left:144px;top:526px;width:59px;height:35px;background:#000;box-shadow:inset 1px 1px #808080,inset -1px -1px #ffffff"></div>
<div class="a t txt " style="left:367px;top:199px;">Name:</div>
<div class="a " style="left:413px;top:192px;width:108px;height:22px;background:#ffffff;box-shadow:inset 1px 1px #808080,inset -1px -1px #ffffff,inset 2px 2px #404040,inset -2px -2px #d4d0c8;"></div>
<div class="a t txt" style="left:417px;top:197px">sf</div>
<div class="a " style="left:371px;top:222px;width:149px;height:35px;border:1px solid #808080;box-shadow:inset 1px 1px #ffffff,0 1px #ffffff,1px 0 #ffffff,1px 1px #ffffff;"></div>
<div class="a t dis" style="left:380px;top:217px;padding:0 3px 0 1px;background:#d4d0c8">Medium: Precedence</div>
<div class="a " style="left:425px;top:234px;width:42px;height:22px;background:#d4d0c8;box-shadow:inset 1px 1px #808080,inset -1px -1px #ffffff,inset 2px 2px #404040,inset -2px -2px #d4d0c8;"></div>
<div class="a " style="left:449px;top:236px;width:16px;height:9px;background:#d4d0c8;box-shadow:inset -1px -1px #404040,inset 1px 1px #d4d0c8,inset -2px -2px #808080,inset 2px 2px #ffffff"></div>
<div class="a " style="left:449px;top:245px;width:16px;height:9px;background:#d4d0c8;box-shadow:inset -1px -1px #404040,inset 1px 1px #d4d0c8,inset -2px -2px #808080,inset 2px 2px #ffffff"></div>
<svg class="a" style="left:456px;top:241px" width="3" height="2" shape-rendering="crispEdges"><rect x="1" y="0" width="1" height="1" fill="#ffffff"/><rect x="0" y="1" width="3" height="1" fill="#ffffff"/></svg>
<svg class="a" style="left:455px;top:240px" width="3" height="2" shape-rendering="crispEdges"><rect x="1" y="0" width="1" height="1" fill="#808080"/><rect x="0" y="1" width="3" height="1" fill="#808080"/></svg>
<svg class="a" style="left:456px;top:249px" width="3" height="2" shape-rendering="crispEdges"><rect x="0" y="0" width="3" height="1" fill="#ffffff"/><rect x="1" y="1" width="1" height="1" fill="#ffffff"/></svg>
<svg class="a" style="left:455px;top:248px" width="3" height="2" shape-rendering="crispEdges"><rect x="0" y="0" width="3" height="1" fill="#808080"/><rect x="1" y="1" width="1" height="1" fill="#808080"/></svg>
<div class="a " style="left:427px;top:236px;width:22px;height:18px;border:1px solid #ffffff"></div>
<div class="a t edis" style="left:429px;top:239px;letter-spacing:-0.5px">2</div>
<div class="a " style="left:371px;top:264px;width:149px;height:41px;border:1px solid #808080;box-shadow:inset 1px 1px #ffffff,0 1px #ffffff,1px 0 #ffffff,1px 1px #ffffff;"></div>
<div class="a t dis" style="left:380px;top:259px;padding:0 3px 0 1px;background:#d4d0c8">Medium: Atmosphere</div>
<div class="a t ldis " style="left:379px;top:278px;">Turbidity:</div>
<div class="a " style="left:443px;top:276px;width:54px;height:22px;background:#d4d0c8;box-shadow:inset 1px 1px #808080,inset -1px -1px #ffffff,inset 2px 2px #404040,inset -2px -2px #d4d0c8;"></div>
<div class="a " style="left:479px;top:278px;width:16px;height:9px;background:#d4d0c8;box-shadow:inset -1px -1px #404040,inset 1px 1px #d4d0c8,inset -2px -2px #808080,inset 2px 2px #ffffff"></div>
<div class="a " style="left:479px;top:287px;width:16px;height:9px;background:#d4d0c8;box-shadow:inset -1px -1px #404040,inset 1px 1px #d4d0c8,inset -2px -2px #808080,inset 2px 2px #ffffff"></div>
<svg class="a" style="left:486px;top:283px" width="3" height="2" shape-rendering="crispEdges"><rect x="1" y="0" width="1" height="1" fill="#ffffff"/><rect x="0" y="1" width="3" height="1" fill="#ffffff"/></svg>
<svg class="a" style="left:485px;top:282px" width="3" height="2" shape-rendering="crispEdges"><rect x="1" y="0" width="1" height="1" fill="#808080"/><rect x="0" y="1" width="3" height="1" fill="#808080"/></svg>
<svg class="a" style="left:486px;top:291px" width="3" height="2" shape-rendering="crispEdges"><rect x="0" y="0" width="3" height="1" fill="#ffffff"/><rect x="1" y="1" width="1" height="1" fill="#ffffff"/></svg>
<svg class="a" style="left:485px;top:290px" width="3" height="2" shape-rendering="crispEdges"><rect x="0" y="0" width="3" height="1" fill="#808080"/><rect x="1" y="1" width="1" height="1" fill="#808080"/></svg>
<div class="a " style="left:445px;top:278px;width:34px;height:18px;border:1px solid #ffffff"></div>
<div class="a t edis" style="left:447px;top:281px;letter-spacing:-0.5px">2,00</div>
<div class="a " style="left:371px;top:318px;width:221px;height:35px;border:1px solid #808080;box-shadow:inset 1px 1px #ffffff,0 1px #ffffff,1px 0 #ffffff,1px 1px #ffffff;"></div>
<div class="a t dis" style="left:380px;top:313px;padding:0 3px 0 1px;background:#d4d0c8">Medium: Dermis</div>
<div class="a t ldis " style="left:379px;top:330px;">Hemoglobin Fraction:</div>
<div class="a " style="left:509px;top:324px;width:77px;height:22px;background:#d4d0c8;box-shadow:inset 1px 1px #808080,inset -1px -1px #ffffff,inset 2px 2px #404040,inset -2px -2px #d4d0c8;"></div>
<div class="a " style="left:568px;top:326px;width:16px;height:9px;background:#d4d0c8;box-shadow:inset -1px -1px #404040,inset 1px 1px #d4d0c8,inset -2px -2px #808080,inset 2px 2px #ffffff"></div>
<div class="a " style="left:568px;top:335px;width:16px;height:9px;background:#d4d0c8;box-shadow:inset -1px -1px #404040,inset 1px 1px #d4d0c8,inset -2px -2px #808080,inset 2px 2px #ffffff"></div>
<svg class="a" style="left:575px;top:331px" width="3" height="2" shape-rendering="crispEdges"><rect x="1" y="0" width="1" height="1" fill="#ffffff"/><rect x="0" y="1" width="3" height="1" fill="#ffffff"/></svg>
<svg class="a" style="left:574px;top:330px" width="3" height="2" shape-rendering="crispEdges"><rect x="1" y="0" width="1" height="1" fill="#808080"/><rect x="0" y="1" width="3" height="1" fill="#808080"/></svg>
<svg class="a" style="left:575px;top:339px" width="3" height="2" shape-rendering="crispEdges"><rect x="0" y="0" width="3" height="1" fill="#ffffff"/><rect x="1" y="1" width="1" height="1" fill="#ffffff"/></svg>
<svg class="a" style="left:574px;top:338px" width="3" height="2" shape-rendering="crispEdges"><rect x="0" y="0" width="3" height="1" fill="#808080"/><rect x="1" y="1" width="1" height="1" fill="#808080"/></svg>
<div class="a " style="left:511px;top:326px;width:57px;height:18px;border:1px solid #ffffff"></div>
<div class="a t edis" style="left:513px;top:329px;letter-spacing:-0.5px">0,050000</div>
<div class="a " style="left:371px;top:360px;width:215px;height:59px;border:1px solid #808080;box-shadow:inset 1px 1px #ffffff,0 1px #ffffff,1px 0 #ffffff,1px 1px #ffffff;"></div>
<div class="a t dis" style="left:380px;top:355px;padding:0 3px 0 1px;background:#d4d0c8">Medium: Epidermis</div>
<div class="a t ldis " style="left:378px;top:373px;">Melanin Fraction:</div>
<div class="a " style="left:503px;top:372px;width:77px;height:22px;background:#d4d0c8;box-shadow:inset 1px 1px #808080,inset -1px -1px #ffffff,inset 2px 2px #404040,inset -2px -2px #d4d0c8;"></div>
<div class="a " style="left:562px;top:374px;width:16px;height:9px;background:#d4d0c8;box-shadow:inset -1px -1px #404040,inset 1px 1px #d4d0c8,inset -2px -2px #808080,inset 2px 2px #ffffff"></div>
<div class="a " style="left:562px;top:383px;width:16px;height:9px;background:#d4d0c8;box-shadow:inset -1px -1px #404040,inset 1px 1px #d4d0c8,inset -2px -2px #808080,inset 2px 2px #ffffff"></div>
<svg class="a" style="left:569px;top:379px" width="3" height="2" shape-rendering="crispEdges"><rect x="1" y="0" width="1" height="1" fill="#ffffff"/><rect x="0" y="1" width="3" height="1" fill="#ffffff"/></svg>
<svg class="a" style="left:568px;top:378px" width="3" height="2" shape-rendering="crispEdges"><rect x="1" y="0" width="1" height="1" fill="#808080"/><rect x="0" y="1" width="3" height="1" fill="#808080"/></svg>
<svg class="a" style="left:569px;top:387px" width="3" height="2" shape-rendering="crispEdges"><rect x="0" y="0" width="3" height="1" fill="#ffffff"/><rect x="1" y="1" width="1" height="1" fill="#ffffff"/></svg>
<svg class="a" style="left:568px;top:386px" width="3" height="2" shape-rendering="crispEdges"><rect x="0" y="0" width="3" height="1" fill="#808080"/><rect x="1" y="1" width="1" height="1" fill="#808080"/></svg>
<div class="a " style="left:505px;top:374px;width:57px;height:18px;border:1px solid #ffffff"></div>
<div class="a t edis" style="left:507px;top:377px;letter-spacing:-0.5px">0,020000</div>
<div class="a t ldis " style="left:378px;top:397px;">Melanin Type Blend:</div>
<div class="a " style="left:503px;top:396px;width:77px;height:22px;background:#d4d0c8;box-shadow:inset 1px 1px #808080,inset -1px -1px #ffffff,inset 2px 2px #404040,inset -2px -2px #d4d0c8;"></div>
<div class="a " style="left:562px;top:398px;width:16px;height:9px;background:#d4d0c8;box-shadow:inset -1px -1px #404040,inset 1px 1px #d4d0c8,inset -2px -2px #808080,inset 2px 2px #ffffff"></div>
<div class="a " style="left:562px;top:407px;width:16px;height:9px;background:#d4d0c8;box-shadow:inset -1px -1px #404040,inset 1px 1px #d4d0c8,inset -2px -2px #808080,inset 2px 2px #ffffff"></div>
<svg class="a" style="left:569px;top:403px" width="3" height="2" shape-rendering="crispEdges"><rect x="1" y="0" width="1" height="1" fill="#ffffff"/><rect x="0" y="1" width="3" height="1" fill="#ffffff"/></svg>
<svg class="a" style="left:568px;top:402px" width="3" height="2" shape-rendering="crispEdges"><rect x="1" y="0" width="1" height="1" fill="#808080"/><rect x="0" y="1" width="3" height="1" fill="#808080"/></svg>
<svg class="a" style="left:569px;top:411px" width="3" height="2" shape-rendering="crispEdges"><rect x="0" y="0" width="3" height="1" fill="#ffffff"/><rect x="1" y="1" width="1" height="1" fill="#ffffff"/></svg>
<svg class="a" style="left:568px;top:410px" width="3" height="2" shape-rendering="crispEdges"><rect x="0" y="0" width="3" height="1" fill="#808080"/><rect x="1" y="1" width="1" height="1" fill="#808080"/></svg>
<div class="a " style="left:505px;top:398px;width:57px;height:18px;border:1px solid #ffffff"></div>
<div class="a t edis" style="left:507px;top:401px;letter-spacing:-0.5px">0,250000</div>
<div class="a " style="left:371px;top:426px;width:551px;height:95px;border:1px solid #808080;box-shadow:inset 1px 1px #ffffff,0 1px #ffffff,1px 0 #ffffff,1px 1px #ffffff;"></div>
<div class="a t txt" style="left:380px;top:421px;padding:0 3px 0 1px;background:#d4d0c8">Blend</div>
<div class="a " style="left:377px;top:438px;width:61px;height:33px;background:#d4d0c8;box-shadow:inset -1px -1px #404040,inset 1px 1px #ffffff,inset -2px -2px #808080;"></div>
<div class="a t txt" style="left:377px;width:61px;text-align:center;top:447px;">Color A</div>
<div class="a " style="left:377px;top:474px;width:61px;height:33px;background:#d4d0c8;box-shadow:inset -1px -1px #404040,inset 1px 1px #ffffff,inset -2px -2px #808080;"></div>
<div class="a t txt" style="left:377px;width:61px;text-align:center;top:483px;">Color B</div>
<div class="a " style="left:443px;top:438px;width:58px;height:34px;background:#000;box-shadow:inset 1px 1px #808080,inset -1px -1px #ffffff"></div>
<div class="a " style="left:443px;top:474px;width:58px;height:33px;background:#000;box-shadow:inset 1px 1px #808080,inset -1px -1px #ffffff"></div>
<div class="a " style="left:503px;top:438px;width:58px;height:75px;background:#d4d0c8;box-shadow:inset -1px -1px #404040,inset 1px 1px #ffffff,inset -2px -2px #808080;"></div>
<div class="a t txt" style="left:503px;width:58px;text-align:center;top:460px;">Blend</div>
<div class="a t txt" style="left:503px;width:58px;text-align:center;top:475px;">Colors</div>
<div class="a " style="left:563px;top:438px;width:58px;height:75px;background:#000;box-shadow:inset 1px 1px #808080,inset -1px -1px #ffffff"></div>
<div class="a t txt " style="left:631px;top:439px;">A Name:</div>
<div class="a t txt" style="left:698px;top:440px;letter-spacing:-0.3px">..................</div>
<div class="a t txt " style="left:631px;top:469px;">B Name:</div>
<div class="a t txt" style="left:698px;top:470px;letter-spacing:-0.3px">..................</div>
<div class="a t txt " style="left:631px;top:499px;">Blend Factor:</div>
<div class="a " style="left:713px;top:492px;width:54px;height:22px;background:#ffffff;box-shadow:inset 1px 1px #808080,inset -1px -1px #ffffff,inset 2px 2px #404040,inset -2px -2px #d4d0c8;"></div>
<div class="a " style="left:749px;top:494px;width:16px;height:9px;background:#d4d0c8;box-shadow:inset -1px -1px #404040,inset 1px 1px #d4d0c8,inset -2px -2px #808080,inset 2px 2px #ffffff"></div>
<div class="a " style="left:749px;top:503px;width:16px;height:9px;background:#d4d0c8;box-shadow:inset -1px -1px #404040,inset 1px 1px #d4d0c8,inset -2px -2px #808080,inset 2px 2px #ffffff"></div>
<svg class="a" style="left:755px;top:498px" width="3" height="2" shape-rendering="crispEdges"><rect x="1" y="0" width="1" height="1" fill="#000"/><rect x="0" y="1" width="3" height="1" fill="#000"/></svg>
<svg class="a" style="left:755px;top:506px" width="3" height="2" shape-rendering="crispEdges"><rect x="0" y="0" width="3" height="1" fill="#000"/><rect x="1" y="1" width="1" height="1" fill="#000"/></svg>
<div class="a t txt" style="left:717px;top:497px;letter-spacing:-0.5px">0,50</div>
<div class="a " style="left:785px;top:438px;width:135px;height:23px;background:#d4d0c8;box-shadow:inset -1px -1px #404040,inset 1px 1px #ffffff,inset -2px -2px #808080;"></div>
<div class="a t txt" style="left:785px;width:135px;text-align:center;top:442px;">Link A From Current</div>
<div class="a " style="left:785px;top:468px;width:135px;height:23px;background:#d4d0c8;box-shadow:inset -1px -1px #404040,inset 1px 1px #ffffff,inset -2px -2px #808080;"></div>
<div class="a t txt" style="left:785px;width:135px;text-align:center;top:472px;">Link B From Current</div>
<div class="a " style="left:527px;top:198px;width:317px;height:59px;border:1px solid #808080;box-shadow:inset 1px 1px #ffffff,0 1px #ffffff,1px 0 #ffffff,1px 1px #ffffff;"></div>
<div class="a t dis" style="left:536px;top:193px;padding:0 3px 0 1px;background:#d4d0c8">Phong</div>
<div class="a t ldis " style="left:535px;top:210px;">Fresnel Scale:</div>
<div class="a " style="left:641px;top:204px;width:53px;height:22px;background:#d4d0c8;box-shadow:inset 1px 1px #808080,inset -1px -1px #ffffff,inset 2px 2px #404040,inset -2px -2px #d4d0c8;"></div>
<div class="a " style="left:676px;top:206px;width:16px;height:9px;background:#d4d0c8;box-shadow:inset -1px -1px #404040,inset 1px 1px #d4d0c8,inset -2px -2px #808080,inset 2px 2px #ffffff"></div>
<div class="a " style="left:676px;top:215px;width:16px;height:9px;background:#d4d0c8;box-shadow:inset -1px -1px #404040,inset 1px 1px #d4d0c8,inset -2px -2px #808080,inset 2px 2px #ffffff"></div>
<svg class="a" style="left:683px;top:211px" width="3" height="2" shape-rendering="crispEdges"><rect x="1" y="0" width="1" height="1" fill="#ffffff"/><rect x="0" y="1" width="3" height="1" fill="#ffffff"/></svg>
<svg class="a" style="left:682px;top:210px" width="3" height="2" shape-rendering="crispEdges"><rect x="1" y="0" width="1" height="1" fill="#808080"/><rect x="0" y="1" width="3" height="1" fill="#808080"/></svg>
<svg class="a" style="left:683px;top:219px" width="3" height="2" shape-rendering="crispEdges"><rect x="0" y="0" width="3" height="1" fill="#ffffff"/><rect x="1" y="1" width="1" height="1" fill="#ffffff"/></svg>
<svg class="a" style="left:682px;top:218px" width="3" height="2" shape-rendering="crispEdges"><rect x="0" y="0" width="3" height="1" fill="#808080"/><rect x="1" y="1" width="1" height="1" fill="#808080"/></svg>
<div class="a " style="left:643px;top:206px;width:33px;height:18px;border:1px solid #ffffff"></div>
<div class="a t edis" style="left:645px;top:209px;letter-spacing:-0.5px">0,50</div>
<div class="a " style="left:749px;top:207px;width:13px;height:13px;background:#d4d0c8;box-shadow:inset 1px 1px #808080,inset -1px -1px #ffffff,inset 2px 2px #404040,inset -2px -2px #d4d0c8;"></div>
<div class="a t dis " style="left:767px;top:207px;">NK</div>
<div class="a t ldis " style="left:535px;top:234px;">Filename or path:</div>
<div class="a " style="left:641px;top:228px;width:201px;height:22px;background:#d4d0c8;box-shadow:inset 1px 1px #808080,inset -1px -1px #ffffff,inset 2px 2px #404040,inset -2px -2px #d4d0c8;"></div>
<div class="a " style="left:851px;top:198px;width:155px;height:65px;border:1px solid #808080;box-shadow:inset 1px 1px #ffffff,0 1px #ffffff,1px 0 #ffffff,1px 1px #ffffff;"></div>
<div class="a t dis" style="left:860px;top:193px;padding:0 3px 0 1px;background:#d4d0c8">Phong/Medium</div>
<div class="a t ldis" style="left:880px;width:34px;text-align:right;top:217px">IOR:</div>
<div class="a " style="left:923px;top:210px;width:72px;height:22px;background:#d4d0c8;box-shadow:inset 1px 1px #808080,inset -1px -1px #ffffff,inset 2px 2px #404040,inset -2px -2px #d4d0c8;"></div>
<div class="a " style="left:977px;top:212px;width:16px;height:9px;background:#d4d0c8;box-shadow:inset -1px -1px #404040,inset 1px 1px #d4d0c8,inset -2px -2px #808080,inset 2px 2px #ffffff"></div>
<div class="a " style="left:977px;top:221px;width:16px;height:9px;background:#d4d0c8;box-shadow:inset -1px -1px #404040,inset 1px 1px #d4d0c8,inset -2px -2px #808080,inset 2px 2px #ffffff"></div>
<svg class="a" style="left:984px;top:217px" width="3" height="2" shape-rendering="crispEdges"><rect x="1" y="0" width="1" height="1" fill="#ffffff"/><rect x="0" y="1" width="3" height="1" fill="#ffffff"/></svg>
<svg class="a" style="left:983px;top:216px" width="3" height="2" shape-rendering="crispEdges"><rect x="1" y="0" width="1" height="1" fill="#808080"/><rect x="0" y="1" width="3" height="1" fill="#808080"/></svg>
<svg class="a" style="left:984px;top:225px" width="3" height="2" shape-rendering="crispEdges"><rect x="0" y="0" width="3" height="1" fill="#ffffff"/><rect x="1" y="1" width="1" height="1" fill="#ffffff"/></svg>
<svg class="a" style="left:983px;top:224px" width="3" height="2" shape-rendering="crispEdges"><rect x="0" y="0" width="3" height="1" fill="#808080"/><rect x="1" y="1" width="1" height="1" fill="#808080"/></svg>
<div class="a " style="left:925px;top:212px;width:52px;height:18px;border:1px solid #ffffff"></div>
<div class="a t edis" style="left:927px;top:215px;letter-spacing:-0.5px">1,50000</div>
<div class="a t ldis " style="left:859px;top:241px;">Exponent:</div>
<div class="a " style="left:923px;top:234px;width:77px;height:22px;background:#d4d0c8;box-shadow:inset 1px 1px #808080,inset -1px -1px #ffffff,inset 2px 2px #404040,inset -2px -2px #d4d0c8;"></div>
<div class="a " style="left:982px;top:236px;width:16px;height:9px;background:#d4d0c8;box-shadow:inset -1px -1px #404040,inset 1px 1px #d4d0c8,inset -2px -2px #808080,inset 2px 2px #ffffff"></div>
<div class="a " style="left:982px;top:245px;width:16px;height:9px;background:#d4d0c8;box-shadow:inset -1px -1px #404040,inset 1px 1px #d4d0c8,inset -2px -2px #808080,inset 2px 2px #ffffff"></div>
<svg class="a" style="left:989px;top:241px" width="3" height="2" shape-rendering="crispEdges"><rect x="1" y="0" width="1" height="1" fill="#ffffff"/><rect x="0" y="1" width="3" height="1" fill="#ffffff"/></svg>
<svg class="a" style="left:988px;top:240px" width="3" height="2" shape-rendering="crispEdges"><rect x="1" y="0" width="1" height="1" fill="#808080"/><rect x="0" y="1" width="3" height="1" fill="#808080"/></svg>
<svg class="a" style="left:989px;top:249px" width="3" height="2" shape-rendering="crispEdges"><rect x="0" y="0" width="3" height="1" fill="#ffffff"/><rect x="1" y="1" width="1" height="1" fill="#ffffff"/></svg>
<svg class="a" style="left:988px;top:248px" width="3" height="2" shape-rendering="crispEdges"><rect x="0" y="0" width="3" height="1" fill="#808080"/><rect x="1" y="1" width="1" height="1" fill="#808080"/></svg>
<div class="a " style="left:925px;top:236px;width:57px;height:18px;border:1px solid #ffffff"></div>
<div class="a t edis" style="left:927px;top:239px;letter-spacing:-0.5px">1</div>
<div class="a " style="left:587px;top:270px;width:419px;height:37px;border:1px solid #808080;box-shadow:inset 1px 1px #ffffff,0 1px #ffffff,1px 0 #ffffff,1px 1px #ffffff;"></div>
<div class="a t dis" style="left:596px;top:265px;padding:0 3px 0 1px;background:#d4d0c8">Glossy Transparent / Specular</div>
<div class="a t ldis " style="left:595px;top:283px;">Internal Medium Name:</div>
<div class="a t ldis" style="left:752px;top:284px;letter-spacing:-0.3px">..................</div>
<div class="a " style="left:833px;top:276px;width:173px;height:23px;background:#d4d0c8;box-shadow:inset -1px -1px #404040,inset 1px 1px #ffffff,inset -2px -2px #808080;"></div>
<div class="a t dis" style="left:833px;width:173px;text-align:center;top:280px;">Link medium from current</div>
<div class="a " style="left:599px;top:318px;width:209px;height:100px;border:1px solid #808080;box-shadow:inset 1px 1px #ffffff,0 1px #ffffff,1px 0 #ffffff,1px 1px #ffffff;"></div>
<div class="a t dis" style="left:608px;top:313px;padding:0 3px 0 1px;background:#d4d0c8">Base Color (Absorb in Medium)</div>
<svg class="a" style="left:605px;top:335px" width="12" height="12" shape-rendering="crispEdges"><rect x="4" y="0" width="4" height="1" fill="#808080"/><rect x="2" y="1" width="2" height="1" fill="#808080"/><rect x="4" y="1" width="4" height="1" fill="#404040"/><rect x="8" y="1" width="2" height="1" fill="#808080"/><rect x="1" y="2" width="1" height="1" fill="#808080"/><rect x="2" y="2" width="2" height="1" fill="#404040"/><rect x="4" y="2" width="4" height="1" fill="#d4d0c8"/><rect x="8" y="2" width="2" height="1" fill="#404040"/><rect x="10" y="2" width="1" height="1" fill="#ffffff"/><rect x="1" y="3" width="1" height="1" fill="#808080"/><rect x="2" y="3" width="1" height="1" fill="#404040"/><rect x="3" y="3" width="6" height="1" fill="#d4d0c8"/><rect x="9" y="3" width="1" height="1" fill="#d4d0c8"/><rect x="10" y="3" width="1" height="1" fill="#ffffff"/><rect x="0" y="4" width="1" height="1" fill="#808080"/><rect x="1" y="4" width="1" height="1" fill="#404040"/><rect x="2" y="4" width="8" height="1" fill="#d4d0c8"/><rect x="10" y="4" width="1" height="1" fill="#d4d0c8"/><rect x="11" y="4" width="1" height="1" fill="#ffffff"/><rect x="0" y="5" width="1" height="1" fill="#808080"/><rect x="1" y="5" width="1" height="1" fill="#404040"/><rect x="2" y="5" width="8" height="1" fill="#d4d0c8"/><rect x="10" y="5" width="1" height="1" fill="#d4d0c8"/><rect x="11" y="5" width="1" height="1" fill="#ffffff"/><rect x="0" y="6" width="1" height="1" fill="#808080"/><rect x="1" y="6" width="1" height="1" fill="#404040"/><rect x="2" y="6" width="8" height="1" fill="#d4d0c8"/><rect x="10" y="6" width="1" height="1" fill="#d4d0c8"/><rect x="11" y="6" width="1" height="1" fill="#ffffff"/><rect x="0" y="7" width="1" height="1" fill="#808080"/><rect x="1" y="7" width="1" height="1" fill="#404040"/><rect x="2" y="7" width="8" height="1" fill="#d4d0c8"/><rect x="10" y="7" width="1" height="1" fill="#d4d0c8"/><rect x="11" y="7" width="1" height="1" fill="#ffffff"/><rect x="1" y="8" width="1" height="1" fill="#808080"/><rect x="2" y="8" width="1" height="1" fill="#404040"/><rect x="3" y="8" width="6" height="1" fill="#d4d0c8"/><rect x="9" y="8" width="1" height="1" fill="#d4d0c8"/><rect x="10" y="8" width="1" height="1" fill="#ffffff"/><rect x="1" y="9" width="1" height="1" fill="#ffffff"/><rect x="2" y="9" width="2" height="1" fill="#d4d0c8"/><rect x="4" y="9" width="4" height="1" fill="#d4d0c8"/><rect x="8" y="9" width="2" height="1" fill="#d4d0c8"/><rect x="10" y="9" width="1" height="1" fill="#ffffff"/><rect x="2" y="10" width="2" height="1" fill="#ffffff"/><rect x="4" y="10" width="4" height="1" fill="#d4d0c8"/><rect x="8" y="10" width="2" height="1" fill="#ffffff"/><rect x="4" y="11" width="4" height="1" fill="#ffffff"/></svg>
<svg class="a" style="left:605px;top:335px" width="12" height="8" shape-rendering="crispEdges"><rect x="5" y="4" width="2" height="1" fill="#808080"/><rect x="4" y="5" width="4" height="1" fill="#808080"/><rect x="4" y="6" width="4" height="1" fill="#808080"/><rect x="5" y="7" width="2" height="1" fill="#808080"/></svg>
<div class="a t dis " style="left:622px;top:333px;">Uniform</div>
<svg class="a" style="left:605px;top:353px" width="12" height="12" shape-rendering="crispEdges"><rect x="4" y="0" width="4" height="1" fill="#808080"/><rect x="2" y="1" width="2" height="1" fill="#808080"/><rect x="4" y="1" width="4" height="1" fill="#404040"/><rect x="8" y="1" width="2" height="1" fill="#808080"/><rect x="1" y="2" width="1" height="1" fill="#808080"/><rect x="2" y="2" width="2" height="1" fill="#404040"/><rect x="4" y="2" width="4" height="1" fill="#d4d0c8"/><rect x="8" y="2" width="2" height="1" fill="#404040"/><rect x="10" y="2" width="1" height="1" fill="#ffffff"/><rect x="1" y="3" width="1" height="1" fill="#808080"/><rect x="2" y="3" width="1" height="1" fill="#404040"/><rect x="3" y="3" width="6" height="1" fill="#d4d0c8"/><rect x="9" y="3" width="1" height="1" fill="#d4d0c8"/><rect x="10" y="3" width="1" height="1" fill="#ffffff"/><rect x="0" y="4" width="1" height="1" fill="#808080"/><rect x="1" y="4" width="1" height="1" fill="#404040"/><rect x="2" y="4" width="8" height="1" fill="#d4d0c8"/><rect x="10" y="4" width="1" height="1" fill="#d4d0c8"/><rect x="11" y="4" width="1" height="1" fill="#ffffff"/><rect x="0" y="5" width="1" height="1" fill="#808080"/><rect x="1" y="5" width="1" height="1" fill="#404040"/><rect x="2" y="5" width="8" height="1" fill="#d4d0c8"/><rect x="10" y="5" width="1" height="1" fill="#d4d0c8"/><rect x="11" y="5" width="1" height="1" fill="#ffffff"/><rect x="0" y="6" width="1" height="1" fill="#808080"/><rect x="1" y="6" width="1" height="1" fill="#404040"/><rect x="2" y="6" width="8" height="1" fill="#d4d0c8"/><rect x="10" y="6" width="1" height="1" fill="#d4d0c8"/><rect x="11" y="6" width="1" height="1" fill="#ffffff"/><rect x="0" y="7" width="1" height="1" fill="#808080"/><rect x="1" y="7" width="1" height="1" fill="#404040"/><rect x="2" y="7" width="8" height="1" fill="#d4d0c8"/><rect x="10" y="7" width="1" height="1" fill="#d4d0c8"/><rect x="11" y="7" width="1" height="1" fill="#ffffff"/><rect x="1" y="8" width="1" height="1" fill="#808080"/><rect x="2" y="8" width="1" height="1" fill="#404040"/><rect x="3" y="8" width="6" height="1" fill="#d4d0c8"/><rect x="9" y="8" width="1" height="1" fill="#d4d0c8"/><rect x="10" y="8" width="1" height="1" fill="#ffffff"/><rect x="1" y="9" width="1" height="1" fill="#ffffff"/><rect x="2" y="9" width="2" height="1" fill="#d4d0c8"/><rect x="4" y="9" width="4" height="1" fill="#d4d0c8"/><rect x="8" y="9" width="2" height="1" fill="#d4d0c8"/><rect x="10" y="9" width="1" height="1" fill="#ffffff"/><rect x="2" y="10" width="2" height="1" fill="#ffffff"/><rect x="4" y="10" width="4" height="1" fill="#d4d0c8"/><rect x="8" y="10" width="2" height="1" fill="#ffffff"/><rect x="4" y="11" width="4" height="1" fill="#ffffff"/></svg>
<div class="a t dis " style="left:622px;top:351px;">RGB</div>
<div class="a t ldis " style="left:679px;top:336px;">Value:</div>
<div class="a " style="left:725px;top:330px;width:78px;height:22px;background:#d4d0c8;box-shadow:inset 1px 1px #808080,inset -1px -1px #ffffff,inset 2px 2px #404040,inset -2px -2px #d4d0c8;"></div>
<div class="a " style="left:785px;top:332px;width:16px;height:9px;background:#d4d0c8;box-shadow:inset -1px -1px #404040,inset 1px 1px #d4d0c8,inset -2px -2px #808080,inset 2px 2px #ffffff"></div>
<div class="a " style="left:785px;top:341px;width:16px;height:9px;background:#d4d0c8;box-shadow:inset -1px -1px #404040,inset 1px 1px #d4d0c8,inset -2px -2px #808080,inset 2px 2px #ffffff"></div>
<svg class="a" style="left:792px;top:337px" width="3" height="2" shape-rendering="crispEdges"><rect x="1" y="0" width="1" height="1" fill="#ffffff"/><rect x="0" y="1" width="3" height="1" fill="#ffffff"/></svg>
<svg class="a" style="left:791px;top:336px" width="3" height="2" shape-rendering="crispEdges"><rect x="1" y="0" width="1" height="1" fill="#808080"/><rect x="0" y="1" width="3" height="1" fill="#808080"/></svg>
<svg class="a" style="left:792px;top:345px" width="3" height="2" shape-rendering="crispEdges"><rect x="0" y="0" width="3" height="1" fill="#ffffff"/><rect x="1" y="1" width="1" height="1" fill="#ffffff"/></svg>
<svg class="a" style="left:791px;top:344px" width="3" height="2" shape-rendering="crispEdges"><rect x="0" y="0" width="3" height="1" fill="#808080"/><rect x="1" y="1" width="1" height="1" fill="#808080"/></svg>
<div class="a " style="left:727px;top:332px;width:58px;height:18px;border:1px solid #ffffff"></div>
<div class="a t edis" style="left:729px;top:335px;letter-spacing:-0.5px">1,00</div>
<div class="a t ldis " style="left:667px;top:361px;">Gamma:</div>
<div class="a " style="left:725px;top:354px;width:47px;height:22px;background:#d4d0c8;box-shadow:inset 1px 1px #808080,inset -1px -1px #ffffff,inset 2px 2px #404040,inset -2px -2px #d4d0c8;"></div>
<div class="a " style="left:754px;top:356px;width:16px;height:9px;background:#d4d0c8;box-shadow:inset -1px -1px #404040,inset 1px 1px #d4d0c8,inset -2px -2px #808080,inset 2px 2px #ffffff"></div>
<div class="a " style="left:754px;top:365px;width:16px;height:9px;background:#d4d0c8;box-shadow:inset -1px -1px #404040,inset 1px 1px #d4d0c8,inset -2px -2px #808080,inset 2px 2px #ffffff"></div>
<svg class="a" style="left:761px;top:361px" width="3" height="2" shape-rendering="crispEdges"><rect x="1" y="0" width="1" height="1" fill="#ffffff"/><rect x="0" y="1" width="3" height="1" fill="#ffffff"/></svg>
<svg class="a" style="left:760px;top:360px" width="3" height="2" shape-rendering="crispEdges"><rect x="1" y="0" width="1" height="1" fill="#808080"/><rect x="0" y="1" width="3" height="1" fill="#808080"/></svg>
<svg class="a" style="left:761px;top:369px" width="3" height="2" shape-rendering="crispEdges"><rect x="0" y="0" width="3" height="1" fill="#ffffff"/><rect x="1" y="1" width="1" height="1" fill="#ffffff"/></svg>
<svg class="a" style="left:760px;top:368px" width="3" height="2" shape-rendering="crispEdges"><rect x="0" y="0" width="3" height="1" fill="#808080"/><rect x="1" y="1" width="1" height="1" fill="#808080"/></svg>
<div class="a " style="left:727px;top:356px;width:27px;height:18px;border:1px solid #ffffff"></div>
<div class="a t edis" style="left:729px;top:359px;letter-spacing:-0.5px">2,20</div>
<div class="a " style="left:605px;top:384px;width:60px;height:32px;background:#d4d0c8;box-shadow:inset -1px -1px #404040,inset 1px 1px #ffffff,inset -2px -2px #808080;"></div>
<div class="a t dis" style="left:605px;width:60px;text-align:center;top:392px;">Color</div>
<div class="a " style="left:671px;top:384px;width:60px;height:30px;background:#000;box-shadow:inset 1px 1px #808080,inset -1px -1px #ffffff"></div>
</div>
<div class="ov"></div>
<div class="a " style="left:68px;top:605px;width:890px;height:157px;background:#d4d0c8"></div>
<div class="a " style="left:71px;top:612px;width:881px;height:145px;border:1px solid #808080;box-shadow:inset 1px 1px #ffffff,0 1px #ffffff,1px 0 #ffffff,1px 1px #ffffff;"></div>
<div class="a t txt" style="left:80px;top:607px;padding:0 3px 0 1px;background:#d4d0c8">Texture</div>
<div class="a " style="left:77px;top:627px;width:13px;height:13px;background:#d4d0c8;box-shadow:inset 1px 1px #808080,inset -1px -1px #ffffff,inset 2px 2px #404040,inset -2px -2px #d4d0c8;"></div>
<div class="a t dis " style="left:95px;top:626px;">Albedo</div>
<div class="a " style="left:77px;top:645px;width:13px;height:13px;background:#ffffff;box-shadow:inset 1px 1px #808080,inset -1px -1px #ffffff,inset 2px 2px #404040,inset -2px -2px #d4d0c8;"></div>
<div class="a t txt " style="left:95px;top:644px;">Blend</div>
<div class="a " style="left:77px;top:681px;width:13px;height:13px;background:#d4d0c8;box-shadow:inset 1px 1px #808080,inset -1px -1px #ffffff,inset 2px 2px #404040,inset -2px -2px #d4d0c8;"></div>
<svg class="a" style="left:80px;top:684px" width="7" height="7" shape-rendering="crispEdges"><rect x="6" y="0" width="1" height="1" fill="#808080"/><rect x="5" y="1" width="2" height="1" fill="#808080"/><rect x="0" y="2" width="1" height="1" fill="#808080"/><rect x="4" y="2" width="3" height="1" fill="#808080"/><rect x="0" y="3" width="2" height="1" fill="#808080"/><rect x="3" y="3" width="3" height="1" fill="#808080"/><rect x="0" y="4" width="5" height="1" fill="#808080"/><rect x="1" y="5" width="3" height="1" fill="#808080"/><rect x="2" y="6" width="1" height="1" fill="#808080"/></svg>
<div class="a t dis " style="left:95px;top:680px;">Bump</div>
<div class="a " style="left:77px;top:723px;width:13px;height:13px;background:#d4d0c8;box-shadow:inset 1px 1px #808080,inset -1px -1px #ffffff,inset 2px 2px #404040,inset -2px -2px #d4d0c8;"></div>
<div class="a t dis " style="left:95px;top:722px;">Exponent</div>
<div class="a " style="left:167px;top:624px;width:779px;height:39px;border:1px solid #808080;box-shadow:inset 1px 1px #ffffff,0 1px #ffffff,1px 0 #ffffff,1px 1px #ffffff;"></div>
<div class="a t dis" style="left:176px;top:619px;padding:0 3px 0 1px;background:#d4d0c8">Albedo / Blend</div>
<div class="a t ldis " style="left:175px;top:637px;">A:</div>
<div class="a " style="left:191px;top:636px;width:84px;height:22px;background:#d4d0c8;box-shadow:inset 1px 1px #808080,inset -1px -1px #ffffff,inset 2px 2px #404040,inset -2px -2px #d4d0c8;"></div>
<div class="a " style="left:257px;top:638px;width:16px;height:9px;background:#d4d0c8;box-shadow:inset -1px -1px #404040,inset 1px 1px #d4d0c8,inset -2px -2px #808080,inset 2px 2px #ffffff"></div>
<div class="a " style="left:257px;top:647px;width:16px;height:9px;background:#d4d0c8;box-shadow:inset -1px -1px #404040,inset 1px 1px #d4d0c8,inset -2px -2px #808080,inset 2px 2px #ffffff"></div>
<svg class="a" style="left:264px;top:643px" width="3" height="2" shape-rendering="crispEdges"><rect x="1" y="0" width="1" height="1" fill="#ffffff"/><rect x="0" y="1" width="3" height="1" fill="#ffffff"/></svg>
<svg class="a" style="left:263px;top:642px" width="3" height="2" shape-rendering="crispEdges"><rect x="1" y="0" width="1" height="1" fill="#808080"/><rect x="0" y="1" width="3" height="1" fill="#808080"/></svg>
<svg class="a" style="left:264px;top:651px" width="3" height="2" shape-rendering="crispEdges"><rect x="0" y="0" width="3" height="1" fill="#ffffff"/><rect x="1" y="1" width="1" height="1" fill="#ffffff"/></svg>
<svg class="a" style="left:263px;top:650px" width="3" height="2" shape-rendering="crispEdges"><rect x="0" y="0" width="3" height="1" fill="#808080"/><rect x="1" y="1" width="1" height="1" fill="#808080"/></svg>
<div class="a " style="left:193px;top:638px;width:64px;height:18px;border:1px solid #ffffff"></div>
<div class="a t edis" style="left:195px;top:641px;letter-spacing:-0.5px">0,0000</div>
<div class="a t ldis " style="left:277px;top:637px;">B:</div>
<div class="a " style="left:293px;top:636px;width:83px;height:22px;background:#d4d0c8;box-shadow:inset 1px 1px #808080,inset -1px -1px #ffffff,inset 2px 2px #404040,inset -2px -2px #d4d0c8;"></div>
<div class="a " style="left:358px;top:638px;width:16px;height:9px;background:#d4d0c8;box-shadow:inset -1px -1px #404040,inset 1px 1px #d4d0c8,inset -2px -2px #808080,inset 2px 2px #ffffff"></div>
<div class="a " style="left:358px;top:647px;width:16px;height:9px;background:#d4d0c8;box-shadow:inset -1px -1px #404040,inset 1px 1px #d4d0c8,inset -2px -2px #808080,inset 2px 2px #ffffff"></div>
<svg class="a" style="left:365px;top:643px" width="3" height="2" shape-rendering="crispEdges"><rect x="1" y="0" width="1" height="1" fill="#ffffff"/><rect x="0" y="1" width="3" height="1" fill="#ffffff"/></svg>
<svg class="a" style="left:364px;top:642px" width="3" height="2" shape-rendering="crispEdges"><rect x="1" y="0" width="1" height="1" fill="#808080"/><rect x="0" y="1" width="3" height="1" fill="#808080"/></svg>
<svg class="a" style="left:365px;top:651px" width="3" height="2" shape-rendering="crispEdges"><rect x="0" y="0" width="3" height="1" fill="#ffffff"/><rect x="1" y="1" width="1" height="1" fill="#ffffff"/></svg>
<svg class="a" style="left:364px;top:650px" width="3" height="2" shape-rendering="crispEdges"><rect x="0" y="0" width="3" height="1" fill="#808080"/><rect x="1" y="1" width="1" height="1" fill="#808080"/></svg>
<div class="a " style="left:295px;top:638px;width:63px;height:18px;border:1px solid #ffffff"></div>
<div class="a t edis" style="left:297px;top:641px;letter-spacing:-0.5px">0,0000</div>
<div class="a t ldis " style="left:379px;top:637px;">C:</div>
<div class="a " style="left:395px;top:636px;width:83px;height:22px;background:#d4d0c8;box-shadow:inset 1px 1px #808080,inset -1px -1px #ffffff,inset 2px 2px #404040,inset -2px -2px #d4d0c8;"></div>
<div class="a " style="left:460px;top:638px;width:16px;height:9px;background:#d4d0c8;box-shadow:inset -1px -1px #404040,inset 1px 1px #d4d0c8,inset -2px -2px #808080,inset 2px 2px #ffffff"></div>
<div class="a " style="left:460px;top:647px;width:16px;height:9px;background:#d4d0c8;box-shadow:inset -1px -1px #404040,inset 1px 1px #d4d0c8,inset -2px -2px #808080,inset 2px 2px #ffffff"></div>
<svg class="a" style="left:467px;top:643px" width="3" height="2" shape-rendering="crispEdges"><rect x="1" y="0" width="1" height="1" fill="#ffffff"/><rect x="0" y="1" width="3" height="1" fill="#ffffff"/></svg>
<svg class="a" style="left:466px;top:642px" width="3" height="2" shape-rendering="crispEdges"><rect x="1" y="0" width="1" height="1" fill="#808080"/><rect x="0" y="1" width="3" height="1" fill="#808080"/></svg>
<svg class="a" style="left:467px;top:651px" width="3" height="2" shape-rendering="crispEdges"><rect x="0" y="0" width="3" height="1" fill="#ffffff"/><rect x="1" y="1" width="1" height="1" fill="#ffffff"/></svg>
<svg class="a" style="left:466px;top:650px" width="3" height="2" shape-rendering="crispEdges"><rect x="0" y="0" width="3" height="1" fill="#808080"/><rect x="1" y="1" width="1" height="1" fill="#808080"/></svg>
<div class="a " style="left:397px;top:638px;width:63px;height:18px;border:1px solid #ffffff"></div>
<div class="a t edis" style="left:399px;top:641px;letter-spacing:-0.5px">0,0000</div>
<div class="a t ldis " style="left:482px;top:637px;">Exponent:</div>
<div class="a " style="left:545px;top:636px;width:78px;height:22px;background:#d4d0c8;box-shadow:inset 1px 1px #808080,inset -1px -1px #ffffff,inset 2px 2px #404040,inset -2px -2px #d4d0c8;"></div>
<div class="a " style="left:605px;top:638px;width:16px;height:9px;background:#d4d0c8;box-shadow:inset -1px -1px #404040,inset 1px 1px #d4d0c8,inset -2px -2px #808080,inset 2px 2px #ffffff"></div>
<div class="a " style="left:605px;top:647px;width:16px;height:9px;background:#d4d0c8;box-shadow:inset -1px -1px #404040,inset 1px 1px #d4d0c8,inset -2px -2px #808080,inset 2px 2px #ffffff"></div>
<svg class="a" style="left:612px;top:643px" width="3" height="2" shape-rendering="crispEdges"><rect x="1" y="0" width="1" height="1" fill="#ffffff"/><rect x="0" y="1" width="3" height="1" fill="#ffffff"/></svg>
<svg class="a" style="left:611px;top:642px" width="3" height="2" shape-rendering="crispEdges"><rect x="1" y="0" width="1" height="1" fill="#808080"/><rect x="0" y="1" width="3" height="1" fill="#808080"/></svg>
<svg class="a" style="left:612px;top:651px" width="3" height="2" shape-rendering="crispEdges"><rect x="0" y="0" width="3" height="1" fill="#ffffff"/><rect x="1" y="1" width="1" height="1" fill="#ffffff"/></svg>
<svg class="a" style="left:611px;top:650px" width="3" height="2" shape-rendering="crispEdges"><rect x="0" y="0" width="3" height="1" fill="#808080"/><rect x="1" y="1" width="1" height="1" fill="#808080"/></svg>
<div class="a " style="left:547px;top:638px;width:58px;height:18px;border:1px solid #ffffff"></div>
<div class="a t edis" style="left:549px;top:641px;letter-spacing:-0.5px">1</div>
<div class="a t ldis " style="left:625px;top:637px;">Filename or path:</div>
<div class="a " style="left:731px;top:636px;width:210px;height:22px;background:#d4d0c8;box-shadow:inset 1px 1px #808080,inset -1px -1px #ffffff,inset 2px 2px #404040,inset -2px -2px #d4d0c8;"></div>
<div class="a " style="left:167px;top:672px;width:779px;height:35px;border:1px solid #808080;box-shadow:inset 1px 1px #ffffff,0 1px #ffffff,1px 0 #ffffff,1px 1px #ffffff;"></div>
<div class="a t txt" style="left:176px;top:667px;padding:0 3px 0 1px;background:#d4d0c8">Bump</div>
<div class="a t txt " style="left:175px;top:685px;">A:</div>
<div class="a " style="left:191px;top:684px;width:84px;height:22px;background:#ffffff;box-shadow:inset 1px 1px #808080,inset -1px -1px #ffffff,inset 2px 2px #404040,inset -2px -2px #d4d0c8;"></div>
<div class="a " style="left:257px;top:686px;width:16px;height:9px;background:#d4d0c8;box-shadow:inset -1px -1px #404040,inset 1px 1px #d4d0c8,inset -2px -2px #808080,inset 2px 2px #ffffff"></div>
<div class="a " style="left:257px;top:695px;width:16px;height:9px;background:#d4d0c8;box-shadow:inset -1px -1px #404040,inset 1px 1px #d4d0c8,inset -2px -2px #808080,inset 2px 2px #ffffff"></div>
<svg class="a" style="left:263px;top:690px" width="3" height="2" shape-rendering="crispEdges"><rect x="1" y="0" width="1" height="1" fill="#000"/><rect x="0" y="1" width="3" height="1" fill="#000"/></svg>
<svg class="a" style="left:263px;top:698px" width="3" height="2" shape-rendering="crispEdges"><rect x="0" y="0" width="3" height="1" fill="#000"/><rect x="1" y="1" width="1" height="1" fill="#000"/></svg>
<div class="a t txt" style="left:195px;top:689px;letter-spacing:-0.5px">0,0000</div>
<div class="a t txt " style="left:277px;top:685px;">B:</div>
<div class="a " style="left:293px;top:684px;width:83px;height:22px;background:#ffffff;box-shadow:inset 1px 1px #808080,inset -1px -1px #ffffff,inset 2px 2px #404040,inset -2px -2px #d4d0c8;"></div>
<div class="a " style="left:358px;top:686px;width:16px;height:9px;background:#d4d0c8;box-shadow:inset -1px -1px #404040,inset 1px 1px #d4d0c8,inset -2px -2px #808080,inset 2px 2px #ffffff"></div>
<div class="a " style="left:358px;top:695px;width:16px;height:9px;background:#d4d0c8;box-shadow:inset -1px -1px #404040,inset 1px 1px #d4d0c8,inset -2px -2px #808080,inset 2px 2px #ffffff"></div>
<svg class="a" style="left:364px;top:690px" width="3" height="2" shape-rendering="crispEdges"><rect x="1" y="0" width="1" height="1" fill="#000"/><rect x="0" y="1" width="3" height="1" fill="#000"/></svg>
<svg class="a" style="left:364px;top:698px" width="3" height="2" shape-rendering="crispEdges"><rect x="0" y="0" width="3" height="1" fill="#000"/><rect x="1" y="1" width="1" height="1" fill="#000"/></svg>
<div class="a t txt" style="left:297px;top:689px;letter-spacing:-0.5px">0,0000</div>
<div class="a t txt " style="left:379px;top:685px;">C:</div>
<div class="a " style="left:395px;top:684px;width:83px;height:22px;background:#ffffff;box-shadow:inset 1px 1px #808080,inset -1px -1px #ffffff,inset 2px 2px #404040,inset -2px -2px #d4d0c8;"></div>
<div class="a " style="left:460px;top:686px;width:16px;height:9px;background:#d4d0c8;box-shadow:inset -1px -1px #404040,inset 1px 1px #d4d0c8,inset -2px -2px #808080,inset 2px 2px #ffffff"></div>
<div class="a " style="left:460px;top:695px;width:16px;height:9px;background:#d4d0c8;box-shadow:inset -1px -1px #404040,inset 1px 1px #d4d0c8,inset -2px -2px #808080,inset 2px 2px #ffffff"></div>
<svg class="a" style="left:466px;top:690px" width="3" height="2" shape-rendering="crispEdges"><rect x="1" y="0" width="1" height="1" fill="#000"/><rect x="0" y="1" width="3" height="1" fill="#000"/></svg>
<svg class="a" style="left:466px;top:698px" width="3" height="2" shape-rendering="crispEdges"><rect x="0" y="0" width="3" height="1" fill="#000"/><rect x="1" y="1" width="1" height="1" fill="#000"/></svg>
<div class="a t txt" style="left:399px;top:689px;letter-spacing:-0.5px">0,0000</div>
<div class="a t txt " style="left:482px;top:685px;">Exponent:</div>
<div class="a " style="left:545px;top:684px;width:78px;height:22px;background:#ffffff;box-shadow:inset 1px 1px #808080,inset -1px -1px #ffffff,inset 2px 2px #404040,inset -2px -2px #d4d0c8;"></div>
<div class="a " style="left:605px;top:686px;width:16px;height:9px;background:#d4d0c8;box-shadow:inset -1px -1px #404040,inset 1px 1px #d4d0c8,inset -2px -2px #808080,inset 2px 2px #ffffff"></div>
<div class="a " style="left:605px;top:695px;width:16px;height:9px;background:#d4d0c8;box-shadow:inset -1px -1px #404040,inset 1px 1px #d4d0c8,inset -2px -2px #808080,inset 2px 2px #ffffff"></div>
<svg class="a" style="left:611px;top:690px" width="3" height="2" shape-rendering="crispEdges"><rect x="1" y="0" width="1" height="1" fill="#000"/><rect x="0" y="1" width="3" height="1" fill="#000"/></svg>
<svg class="a" style="left:611px;top:698px" width="3" height="2" shape-rendering="crispEdges"><rect x="0" y="0" width="3" height="1" fill="#000"/><rect x="1" y="1" width="1" height="1" fill="#000"/></svg>
<div class="a t txt" style="left:549px;top:689px;letter-spacing:-0.5px">1</div>
<div class="a t txt " style="left:625px;top:685px;">Filename or path:</div>
<div class="a " style="left:731px;top:684px;width:210px;height:22px;background:#ffffff;box-shadow:inset 1px 1px #808080,inset -1px -1px #ffffff,inset 2px 2px #404040,inset -2px -2px #d4d0c8;"></div>
<div class="a t txt" style="left:735px;top:689px">sdf</div>
<div class="a " style="left:167px;top:714px;width:779px;height:35px;border:1px solid #808080;box-shadow:inset 1px 1px #ffffff,0 1px #ffffff,1px 0 #ffffff,1px 1px #ffffff;"></div>
<div class="a t dis" style="left:176px;top:709px;padding:0 3px 0 1px;background:#d4d0c8">Exponent</div>
<div class="a t ldis " style="left:175px;top:727px;">A:</div>
<div class="a " style="left:191px;top:726px;width:84px;height:22px;background:#d4d0c8;box-shadow:inset 1px 1px #808080,inset -1px -1px #ffffff,inset 2px 2px #404040,inset -2px -2px #d4d0c8;"></div>
<div class="a " style="left:257px;top:728px;width:16px;height:9px;background:#d4d0c8;box-shadow:inset -1px -1px #404040,inset 1px 1px #d4d0c8,inset -2px -2px #808080,inset 2px 2px #ffffff"></div>
<div class="a " style="left:257px;top:737px;width:16px;height:9px;background:#d4d0c8;box-shadow:inset -1px -1px #404040,inset 1px 1px #d4d0c8,inset -2px -2px #808080,inset 2px 2px #ffffff"></div>
<svg class="a" style="left:264px;top:733px" width="3" height="2" shape-rendering="crispEdges"><rect x="1" y="0" width="1" height="1" fill="#ffffff"/><rect x="0" y="1" width="3" height="1" fill="#ffffff"/></svg>
<svg class="a" style="left:263px;top:732px" width="3" height="2" shape-rendering="crispEdges"><rect x="1" y="0" width="1" height="1" fill="#808080"/><rect x="0" y="1" width="3" height="1" fill="#808080"/></svg>
<svg class="a" style="left:264px;top:741px" width="3" height="2" shape-rendering="crispEdges"><rect x="0" y="0" width="3" height="1" fill="#ffffff"/><rect x="1" y="1" width="1" height="1" fill="#ffffff"/></svg>
<svg class="a" style="left:263px;top:740px" width="3" height="2" shape-rendering="crispEdges"><rect x="0" y="0" width="3" height="1" fill="#808080"/><rect x="1" y="1" width="1" height="1" fill="#808080"/></svg>
<div class="a " style="left:193px;top:728px;width:64px;height:18px;border:1px solid #ffffff"></div>
<div class="a t edis" style="left:195px;top:731px;letter-spacing:-0.5px">0,0000</div>
<div class="a t ldis " style="left:277px;top:727px;">B:</div>
<div class="a " style="left:293px;top:726px;width:83px;height:22px;background:#d4d0c8;box-shadow:inset 1px 1px #808080,inset -1px -1px #ffffff,inset 2px 2px #404040,inset -2px -2px #d4d0c8;"></div>
<div class="a " style="left:358px;top:728px;width:16px;height:9px;background:#d4d0c8;box-shadow:inset -1px -1px #404040,inset 1px 1px #d4d0c8,inset -2px -2px #808080,inset 2px 2px #ffffff"></div>
<div class="a " style="left:358px;top:737px;width:16px;height:9px;background:#d4d0c8;box-shadow:inset -1px -1px #404040,inset 1px 1px #d4d0c8,inset -2px -2px #808080,inset 2px 2px #ffffff"></div>
<svg class="a" style="left:365px;top:733px" width="3" height="2" shape-rendering="crispEdges"><rect x="1" y="0" width="1" height="1" fill="#ffffff"/><rect x="0" y="1" width="3" height="1" fill="#ffffff"/></svg>
<svg class="a" style="left:364px;top:732px" width="3" height="2" shape-rendering="crispEdges"><rect x="1" y="0" width="1" height="1" fill="#808080"/><rect x="0" y="1" width="3" height="1" fill="#808080"/></svg>
<svg class="a" style="left:365px;top:741px" width="3" height="2" shape-rendering="crispEdges"><rect x="0" y="0" width="3" height="1" fill="#ffffff"/><rect x="1" y="1" width="1" height="1" fill="#ffffff"/></svg>
<svg class="a" style="left:364px;top:740px" width="3" height="2" shape-rendering="crispEdges"><rect x="0" y="0" width="3" height="1" fill="#808080"/><rect x="1" y="1" width="1" height="1" fill="#808080"/></svg>
<div class="a " style="left:295px;top:728px;width:63px;height:18px;border:1px solid #ffffff"></div>
<div class="a t edis" style="left:297px;top:731px;letter-spacing:-0.5px">0,0000</div>
<div class="a t ldis " style="left:379px;top:727px;">C:</div>
<div class="a " style="left:395px;top:726px;width:83px;height:22px;background:#d4d0c8;box-shadow:inset 1px 1px #808080,inset -1px -1px #ffffff,inset 2px 2px #404040,inset -2px -2px #d4d0c8;"></div>
<div class="a " style="left:460px;top:728px;width:16px;height:9px;background:#d4d0c8;box-shadow:inset -1px -1px #404040,inset 1px 1px #d4d0c8,inset -2px -2px #808080,inset 2px 2px #ffffff"></div>
<div class="a " style="left:460px;top:737px;width:16px;height:9px;background:#d4d0c8;box-shadow:inset -1px -1px #404040,inset 1px 1px #d4d0c8,inset -2px -2px #808080,inset 2px 2px #ffffff"></div>
<svg class="a" style="left:467px;top:733px" width="3" height="2" shape-rendering="crispEdges"><rect x="1" y="0" width="1" height="1" fill="#ffffff"/><rect x="0" y="1" width="3" height="1" fill="#ffffff"/></svg>
<svg class="a" style="left:466px;top:732px" width="3" height="2" shape-rendering="crispEdges"><rect x="1" y="0" width="1" height="1" fill="#808080"/><rect x="0" y="1" width="3" height="1" fill="#808080"/></svg>
<svg class="a" style="left:467px;top:741px" width="3" height="2" shape-rendering="crispEdges"><rect x="0" y="0" width="3" height="1" fill="#ffffff"/><rect x="1" y="1" width="1" height="1" fill="#ffffff"/></svg>
<svg class="a" style="left:466px;top:740px" width="3" height="2" shape-rendering="crispEdges"><rect x="0" y="0" width="3" height="1" fill="#808080"/><rect x="1" y="1" width="1" height="1" fill="#808080"/></svg>
<div class="a " style="left:397px;top:728px;width:63px;height:18px;border:1px solid #ffffff"></div>
<div class="a t edis" style="left:399px;top:731px;letter-spacing:-0.5px">0,0000</div>
<div class="a t ldis " style="left:482px;top:727px;">Exponent:</div>
<div class="a " style="left:545px;top:726px;width:78px;height:22px;background:#d4d0c8;box-shadow:inset 1px 1px #808080,inset -1px -1px #ffffff,inset 2px 2px #404040,inset -2px -2px #d4d0c8;"></div>
<div class="a " style="left:605px;top:728px;width:16px;height:9px;background:#d4d0c8;box-shadow:inset -1px -1px #404040,inset 1px 1px #d4d0c8,inset -2px -2px #808080,inset 2px 2px #ffffff"></div>
<div class="a " style="left:605px;top:737px;width:16px;height:9px;background:#d4d0c8;box-shadow:inset -1px -1px #404040,inset 1px 1px #d4d0c8,inset -2px -2px #808080,inset 2px 2px #ffffff"></div>
<svg class="a" style="left:612px;top:733px" width="3" height="2" shape-rendering="crispEdges"><rect x="1" y="0" width="1" height="1" fill="#ffffff"/><rect x="0" y="1" width="3" height="1" fill="#ffffff"/></svg>
<svg class="a" style="left:611px;top:732px" width="3" height="2" shape-rendering="crispEdges"><rect x="1" y="0" width="1" height="1" fill="#808080"/><rect x="0" y="1" width="3" height="1" fill="#808080"/></svg>
<svg class="a" style="left:612px;top:741px" width="3" height="2" shape-rendering="crispEdges"><rect x="0" y="0" width="3" height="1" fill="#ffffff"/><rect x="1" y="1" width="1" height="1" fill="#ffffff"/></svg>
<svg class="a" style="left:611px;top:740px" width="3" height="2" shape-rendering="crispEdges"><rect x="0" y="0" width="3" height="1" fill="#808080"/><rect x="1" y="1" width="1" height="1" fill="#808080"/></svg>
<div class="a " style="left:547px;top:728px;width:58px;height:18px;border:1px solid #ffffff"></div>
<div class="a t edis" style="left:549px;top:731px;letter-spacing:-0.5px">1</div>
<div class="a t ldis " style="left:625px;top:727px;">Filename or path:</div>
<div class="a " style="left:731px;top:726px;width:210px;height:22px;background:#d4d0c8;box-shadow:inset 1px 1px #808080,inset -1px -1px #ffffff,inset 2px 2px #404040,inset -2px -2px #d4d0c8;"></div>
</body></html>
